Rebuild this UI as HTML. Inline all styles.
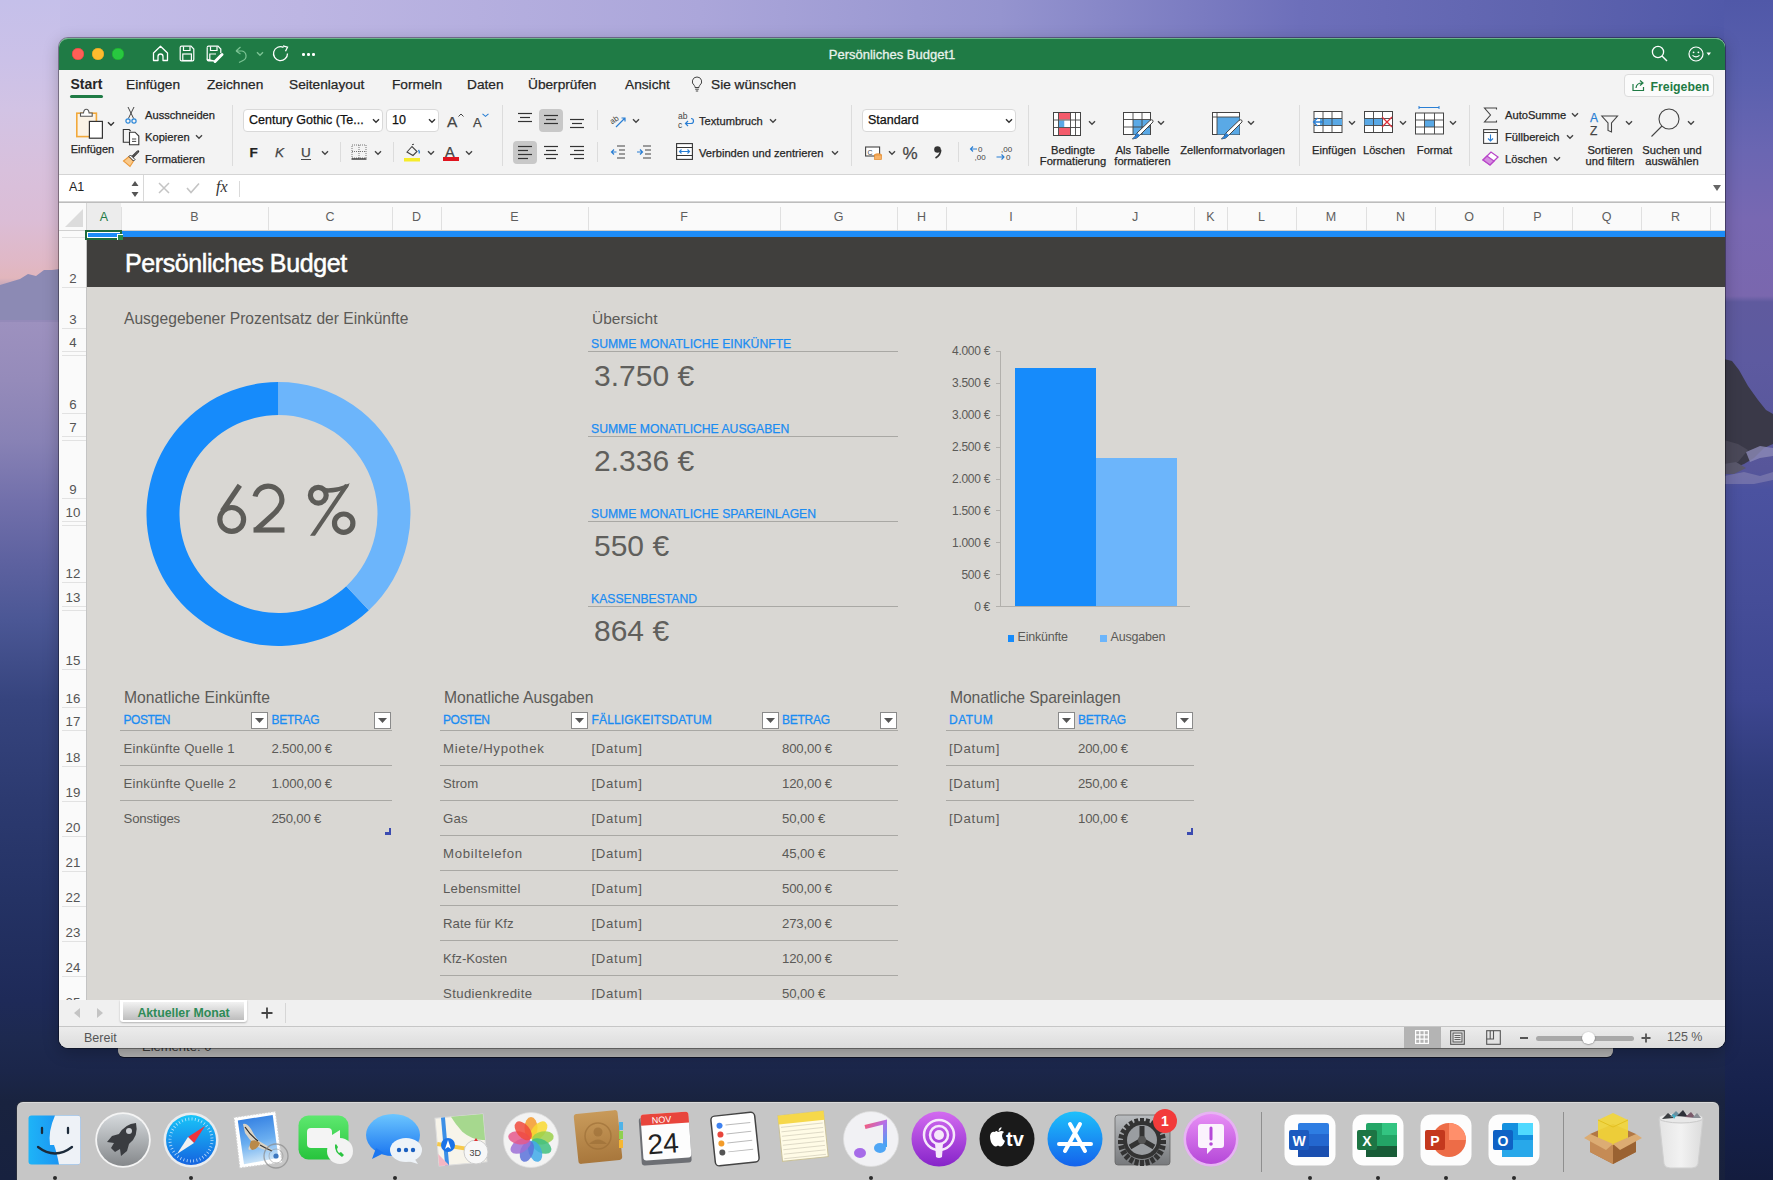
<!DOCTYPE html><html><head><meta charset="utf-8"><style>
*{margin:0;padding:0;box-sizing:border-box}
html,body{width:1773px;height:1180px;overflow:hidden;position:relative;font-family:"Liberation Sans",sans-serif;background:#2a3466}
.a{position:absolute}
.t{position:absolute;white-space:nowrap;line-height:1}
svg{position:absolute;overflow:visible}
</style></head><body><div class="a" style="left:0;top:0;width:1773px;height:120px;background:linear-gradient(90deg,#c6c0ea 0px,#bdb6e3 300px,#aba6da 700px,#9594cf 1000px,#6d6fba 1300px,#5e63ae 1550px,#5159a9 1724px,#5058a8 1773px)"></div>
<div class="a" style="left:0;top:0;width:60px;height:1180px;background:linear-gradient(180deg,#c5c0ea 0px,#cbc1e8 60px,#d2c3e4 110px,#d8c0dc 170px,#dbbdd6 220px,#e0b8c6 262px,#e2b6bc 278px,#8d8bb6 300px,#8a89b3 318px,#9d91bf 322px,#958bba 380px,#8882b5 440px,#7270ab 500px,#5e62a0 560px,#4b5795 620px,#36447e 700px,#2c3a70 800px,#243264 900px,#1e2a58 1000px,#1d294f 1040px,#1b264a 1070px,#19233f 1102px,#17213f 1180px)"></div>
<svg style="left:0;top:260px" width="60" height="70"><polygon points="0,25 10,22 20,19 28,14 36,16 44,10 52,10 60,9 60,60 0,60" fill="#8c8ab4"/><polygon points="0,60 60,60 60,62 0,62" fill="#948ab9"/></svg>
<div class="a" style="left:1724px;top:0;width:49px;height:1180px;background:linear-gradient(180deg,#5058a8 0px,#5a60ae 80px,#6a66b2 150px,#7868b2 220px,#7a67ae 296px,#5f5a9e 302px,#5d5aa0 360px,#57569a 470px,#4b52a0 490px,#454d98 600px,#3d4690 700px,#2f3b7a 780px,#273369 880px,#1f2b5c 980px,#1a2551 1050px,#15204a 1110px,#131c3e 1180px)"></div>
<svg style="left:1724px;top:340px" width="49" height="160"><polygon points="0,19 8,21 15,30 24,46 34,60 42,70 49,74 49,104 40,108 30,118 20,124 10,128 0,130" fill="#3a3948"/><polygon points="0,100 14,104 24,110 14,122 0,126" fill="#4a4858"/><polygon points="0,124 12,122 22,128 10,134 0,134" fill="#5a586c"/><polygon points="22,112 36,106 49,108 49,116 36,118 26,122" fill="#8c8ab6" opacity="0.8"/><polygon points="0,136 20,132 36,136 49,132 49,140 30,144 0,144" fill="#8784b2" opacity="0.6"/></svg>
<div class="a" style="left:59px;top:1040px;width:1666px;height:140px;background:linear-gradient(180deg,#1d294f,#1b264a 30px,#19233f 62px,#17203c)"></div>
<div class="a" style="left:118px;top:1030px;width:1495px;height:27px;background:#b0b0b0;border-radius:0 0 6px 6px;box-shadow:0 1px 0 rgba(0,0,0,.5);"></div>
<div class="t" style="left:142px;top:1040.00px;font-size:13px;color:#3a3a3a;">Elemente: 0</div>
<div class="a" style="left:59px;top:38px;width:1666px;height:1010px;background:#f3f3f3;border-radius:9px;box-shadow:0 4px 16px rgba(0,0,0,.25),0 0 0 1px rgba(0,0,0,.35);"></div>
<div class="a" style="left:59px;top:38px;width:1666px;height:32px;background:#1f7b45;border-radius:9px 9px 0 0;box-shadow:inset 0 1px 0 rgba(200,255,220,.45);"></div>
<div class="a" style="left:72px;top:48px;width:12px;height:12px;background:#fe5f57;border-radius:50%;box-shadow:inset 0 0 0 0.5px #e0443e;"></div>
<div class="a" style="left:92px;top:48px;width:12px;height:12px;background:#febc2e;border-radius:50%;box-shadow:inset 0 0 0 0.5px #dea123;"></div>
<div class="a" style="left:112px;top:48px;width:12px;height:12px;background:#28c840;border-radius:50%;box-shadow:inset 0 0 0 0.5px #1aab29;"></div>
<svg style="left:152px;top:45px;" width="17" height="17" viewBox="0 0 17 17"><path d="M1.5 8 L8.5 1.3 L15.5 8 V15.5 H11 V11.5 A2.5 2.5 0 0 0 6 11.5 V15.5 H1.5 Z" fill="none" stroke="#fff" stroke-width="1.3" stroke-linejoin="round"/></svg>
<svg style="left:179px;top:45px;" width="16" height="17" viewBox="0 0 16 17"><path d="M1.2 2.5 Q1.2 1.2 2.5 1.2 H12 L14.8 4 V14.5 Q14.8 15.8 13.5 15.8 H2.5 Q1.2 15.8 1.2 14.5 Z" fill="none" stroke="#fff" stroke-width="1.2"/><path d="M4.5 1.5 V5.5 H11 V1.5" fill="none" stroke="#fff" stroke-width="1.2"/><rect x="3.8" y="9" width="8.6" height="6.5" fill="none" stroke="#fff" stroke-width="1.2"/></svg>
<svg style="left:206px;top:45px;" width="18" height="18" viewBox="0 0 18 18"><path d="M1.2 2.5 Q1.2 1.2 2.5 1.2 H12 L14.8 4 V8 M8 15.8 H2.5 Q1.2 15.8 1.2 14.5 Z" fill="none" stroke="#fff" stroke-width="1.2"/><path d="M1.2 2.5 V14.5" stroke="#fff" stroke-width="1.2"/><path d="M4.5 1.5 V5.5 H11 V1.5" fill="none" stroke="#fff" stroke-width="1.2"/><path d="M3.8 15.5 V9 H10" fill="none" stroke="#fff" stroke-width="1.2"/><path d="M9 16.5 L16 9.5" stroke="#fff" stroke-width="3" stroke-linecap="round"/></svg>
<svg style="left:233px;top:45px;" width="16" height="18" viewBox="0 0 16 18"><path d="M3 6 L7.5 2 M3 6 L7.5 9 M3 6 H9 A5 5 0 0 1 10 15.5 L6 17.5" fill="none" stroke="#7cc394" stroke-width="1.2"/></svg>
<svg style="left:256px;top:51px;" width="8" height="6" viewBox="0 0 8 6"><path d="M1 1.2 L4 4.2 L7 1.2" fill="none" stroke="#7cc394" stroke-width="1.4"/></svg>
<svg style="left:272px;top:45px;" width="18" height="18" viewBox="0 0 18 18"><path d="M15.5 8.5 A7 7 0 1 1 11.5 2.3" fill="none" stroke="#fff" stroke-width="1.3"/><path d="M11 0.8 L15.5 2.2 L13.5 6.2" fill="none" stroke="#fff" stroke-width="1.3"/></svg>
<div class="a" style="left:302px;top:53px;width:2.5px;height:2.5px;background:#fff;border-radius:50%;"></div>
<div class="a" style="left:307px;top:53px;width:2.5px;height:2.5px;background:#fff;border-radius:50%;"></div>
<div class="a" style="left:312px;top:53px;width:2.5px;height:2.5px;background:#fff;border-radius:50%;"></div>
<div class="t" style="left:892px;top:47.50px;font-size:13px;color:#e8f2ec;transform:translateX(-50%);-webkit-text-stroke:0.3px currentColor;">Persönliches Budget1</div>
<svg style="left:1651px;top:45px;" width="18" height="18" viewBox="0 0 18 18"><circle cx="7" cy="7" r="5.6" fill="none" stroke="#fff" stroke-width="1.3"/><path d="M11 11 L16 16" stroke="#fff" stroke-width="1.4"/></svg>
<svg style="left:1687px;top:45px;" width="26" height="18" viewBox="0 0 26 18"><circle cx="9" cy="9" r="7" fill="none" stroke="#fff" stroke-width="1.2"/><circle cx="6.6" cy="7.3" r="0.9" fill="#fff"/><circle cx="11.4" cy="7.3" r="0.9" fill="#fff"/><path d="M5.5 10.3 Q9 13.5 12.5 10.3" fill="none" stroke="#fff" stroke-width="1.1"/><path d="M19.5 7.5 H24 L21.75 10.5 Z" fill="#fff"/></svg>
<div class="a" style="left:59px;top:70px;width:1666px;height:104px;background:#f3f3f3;"></div>
<div class="t" style="left:70.5px;top:77.45px;font-size:14px;color:#262626;font-weight:bold;">Start</div>
<div class="t" style="left:126px;top:77.70px;font-size:13.7px;color:#262626;-webkit-text-stroke:0.25px currentColor;">Einfügen</div>
<div class="t" style="left:207px;top:77.70px;font-size:13.7px;color:#262626;-webkit-text-stroke:0.25px currentColor;">Zeichnen</div>
<div class="t" style="left:289px;top:77.70px;font-size:13.7px;color:#262626;-webkit-text-stroke:0.25px currentColor;">Seitenlayout</div>
<div class="t" style="left:392px;top:77.70px;font-size:13.7px;color:#262626;-webkit-text-stroke:0.25px currentColor;">Formeln</div>
<div class="t" style="left:467px;top:77.70px;font-size:13.7px;color:#262626;-webkit-text-stroke:0.25px currentColor;">Daten</div>
<div class="t" style="left:528px;top:77.70px;font-size:13.7px;color:#262626;-webkit-text-stroke:0.25px currentColor;">Überprüfen</div>
<div class="t" style="left:625px;top:77.70px;font-size:13.7px;color:#262626;-webkit-text-stroke:0.25px currentColor;">Ansicht</div>
<div class="t" style="left:711px;top:77.70px;font-size:13.7px;color:#262626;-webkit-text-stroke:0.25px currentColor;">Sie wünschen</div>
<div class="a" style="left:70px;top:95px;width:33px;height:3px;background:#1f7b45;border-radius:1.5px;"></div>
<svg style="left:691px;top:76px;" width="12" height="17" viewBox="0 0 12 17"><path d="M6 1 A4.6 4.6 0 0 0 3.2 9.3 Q4 10.2 4 11.5 H8 Q8 10.2 8.8 9.3 A4.6 4.6 0 0 0 6 1 Z" fill="none" stroke="#444" stroke-width="1"/><path d="M4.2 13.2 H7.8 M4.8 15 H7.2" stroke="#444" stroke-width="1"/></svg>
<div class="a" style="left:1624px;top:74px;width:90px;height:23px;background:#fbfbfb;border:1px solid #dcdcdc;border-radius:4px;"></div>
<svg style="left:1632px;top:78px;" width="14" height="14" viewBox="0 0 14 14"><path d="M1 6 V12.5 H11.5 V9" fill="none" stroke="#1f7b45" stroke-width="1.2"/><path d="M4 10 Q4.5 5 10 5 M8 2.5 L11 5 L8 7.5" fill="none" stroke="#1f7b45" stroke-width="1.2"/></svg>
<div class="t" style="left:1650.5px;top:80.59px;font-size:12.3px;color:#1f7b45;font-weight:bold;">Freigeben</div>
<div class="a" style="left:59px;top:174px;width:1666px;height:1px;background:#d4d4d4;"></div>
<div class="a" style="left:232px;top:105px;width:1px;height:61px;background:#dcdcdc;"></div>
<div class="a" style="left:502px;top:105px;width:1px;height:61px;background:#dcdcdc;"></div>
<div class="a" style="left:851px;top:105px;width:1px;height:61px;background:#dcdcdc;"></div>
<div class="a" style="left:1028px;top:105px;width:1px;height:61px;background:#dcdcdc;"></div>
<div class="a" style="left:1299px;top:105px;width:1px;height:61px;background:#dcdcdc;"></div>
<div class="a" style="left:1469px;top:105px;width:1px;height:61px;background:#dcdcdc;"></div>
<div class="a" style="left:340px;top:142px;width:1px;height:20px;background:#dcdcdc;"></div>
<div class="a" style="left:393px;top:142px;width:1px;height:20px;background:#dcdcdc;"></div>
<div class="a" style="left:597px;top:142px;width:1px;height:20px;background:#dcdcdc;"></div>
<div class="a" style="left:958px;top:142px;width:1px;height:20px;background:#dcdcdc;"></div>
<div class="a" style="left:597px;top:110px;width:1px;height:20px;background:#dcdcdc;"></div>
<svg style="left:75px;top:107px;" width="34" height="36" viewBox="0 0 34 36"><rect x="1.8" y="6.2" width="19.6" height="23.4" fill="#fbf3e6" stroke="#f2a93b" stroke-width="1.6"/><path d="M5.5 9.3 V6 H8.5 Q9 2.3 11.3 2.3 Q13.6 2.3 14.1 6 H17.2 V9.3 Z" fill="#fff" stroke="#555" stroke-width="1.1"/><rect x="14.4" y="14.4" width="13" height="16.8" fill="#fff" stroke="#333" stroke-width="1.2"/></svg>
<svg style="left:107px;top:120.5px;" width="8" height="6" viewBox="0 0 8 6"><path d="M1 1.2 L4 4.2 L7 1.2" fill="none" stroke="#333" stroke-width="1.4"/></svg>
<div class="t" style="left:92.5px;top:144.19px;font-size:11px;color:#262626;transform:translateX(-50%);-webkit-text-stroke:0.25px currentColor;">Einfügen</div>
<svg style="left:124px;top:106px;" width="14" height="18" viewBox="0 0 14 18"><path d="M4 1 L9.6 12.5 M10 1 L4.4 12.5" stroke="#444" stroke-width="1"/><circle cx="4" cy="15" r="2.1" fill="none" stroke="#2a86d8" stroke-width="1.2"/><circle cx="10" cy="15" r="2.1" fill="none" stroke="#2a86d8" stroke-width="1.2"/></svg>
<div class="t" style="left:145px;top:109.56px;font-size:11.15px;color:#262626;-webkit-text-stroke:0.25px currentColor;">Ausschneiden</div>
<svg style="left:122px;top:128px;" width="18" height="18" viewBox="0 0 18 18"><path d="M7.5 14.3 H1.3 V1.5 H7.2 L8.6 3" fill="none" stroke="#333" stroke-width="1.1"/><path d="M7.5 4.2 H13 L16.8 8 V16.7 H7.5 Z" fill="#fff" stroke="#333" stroke-width="1.1"/><path d="M10 11 H14.2 M10 13.4 H14.2" stroke="#444" stroke-width="1"/></svg>
<div class="t" style="left:145px;top:131.56px;font-size:11.15px;color:#262626;-webkit-text-stroke:0.25px currentColor;">Kopieren</div>
<svg style="left:195px;top:134px;" width="8" height="6" viewBox="0 0 8 6"><path d="M1 1.2 L4 4.2 L7 1.2" fill="none" stroke="#444" stroke-width="1.4"/></svg>
<svg style="left:122px;top:150px;" width="18" height="18" viewBox="0 0 18 18"><path d="M1.5 11 L7 6.5 L11.5 11 L8 16.5 Z" fill="#f9c98a" stroke="#eb9a3c" stroke-width="1.1"/><path d="M7 6.5 L11.5 11 L13 9.5 L8.5 5 Z" fill="#fff" stroke="#333" stroke-width="1"/><path d="M11 7.5 L16.3 2.2 Q17 1.5 16.6 1 Q16 0.6 15.4 1.2 L10 6.5" fill="#fff" stroke="#333" stroke-width="1.1"/></svg>
<div class="t" style="left:145px;top:153.56px;font-size:11.15px;color:#262626;-webkit-text-stroke:0.25px currentColor;">Formatieren</div>
<div class="a" style="left:243px;top:109px;width:140px;height:23px;background:#fff;border:1px solid #d9d9d9;border-radius:4px;"></div>
<div class="t" style="left:249px;top:114.42px;font-size:12.5px;color:#111;-webkit-text-stroke:0.25px currentColor;">Century Gothic (Te...</div>
<svg style="left:372px;top:118px;" width="8" height="6" viewBox="0 0 8 6"><path d="M1 1.2 L4 4.2 L7 1.2" fill="none" stroke="#333" stroke-width="1.4"/></svg>
<div class="a" style="left:386px;top:109px;width:53px;height:23px;background:#fff;border:1px solid #d9d9d9;border-radius:4px;"></div>
<div class="t" style="left:392px;top:114.42px;font-size:12.5px;color:#111;-webkit-text-stroke:0.25px currentColor;">10</div>
<svg style="left:428px;top:118px;" width="8" height="6" viewBox="0 0 8 6"><path d="M1 1.2 L4 4.2 L7 1.2" fill="none" stroke="#333" stroke-width="1.4"/></svg>
<div class="t" style="left:447px;top:113.88px;font-size:15.5px;color:#444;-webkit-text-stroke:0.25px currentColor;">A</div>
<svg style="left:458px;top:113px;" width="6" height="4" viewBox="0 0 6 4"><path d="M0.5 3.5 L3 1 L5.5 3.5" fill="none" stroke="#444" stroke-width="1"/></svg>
<div class="t" style="left:473px;top:116.00px;font-size:13px;color:#444;-webkit-text-stroke:0.25px currentColor;">A</div>
<svg style="left:482px;top:113px;" width="7" height="4" viewBox="0 0 7 4"><path d="M0.5 0.8 L3.5 3.3 L6.5 0.8" fill="none" stroke="#2a7fd4" stroke-width="1.1"/></svg>
<div class="t" style="left:249.5px;top:146.07px;font-size:13.5px;color:#222;font-weight:bold;-webkit-text-stroke:0.25px currentColor;">F</div>
<div class="t" style="left:275px;top:146.07px;font-size:13.5px;color:#444;-webkit-text-stroke:0.25px currentColor;"><i>K</i></div>
<div class="t" style="left:301px;top:146.07px;font-size:13.5px;color:#444;-webkit-text-stroke:0.25px currentColor;">U</div>
<div class="a" style="left:301px;top:159px;width:10px;height:1px;background:#444;"></div>
<svg style="left:321px;top:150px;" width="8" height="6" viewBox="0 0 8 6"><path d="M1 1.2 L4 4.2 L7 1.2" fill="none" stroke="#444" stroke-width="1.4"/></svg>
<svg style="left:351px;top:144px;" width="16" height="16" viewBox="0 0 16 16"><rect x="1" y="1" width="14" height="13" fill="none" stroke="#555" stroke-width="0.8" stroke-dasharray="1 1"/><path d="M8 1 V14 M1 7.5 H15" stroke="#555" stroke-width="0.8" stroke-dasharray="1 1"/><path d="M0.5 15 H15.5" stroke="#222" stroke-width="1.3"/></svg>
<svg style="left:374px;top:150px;" width="8" height="6" viewBox="0 0 8 6"><path d="M1 1.2 L4 4.2 L7 1.2" fill="none" stroke="#444" stroke-width="1.4"/></svg>
<svg style="left:403px;top:143px;" width="20" height="20" viewBox="0 0 20 20"><path d="M4 9 L9 3.5 L14 8.5 L10 12.5 Z" fill="none" stroke="#444" stroke-width="1.1"/><path d="M9 2 Q10 0.5 11 1.5" fill="none" stroke="#444" stroke-width="1"/><path d="M15.5 7 Q17 9 16 10.5" fill="none" stroke="#2a7fd4" stroke-width="1.3"/><rect x="1" y="15" width="16" height="3.5" fill="#f6ec2a"/></svg>
<svg style="left:427px;top:150px;" width="8" height="6" viewBox="0 0 8 6"><path d="M1 1.2 L4 4.2 L7 1.2" fill="none" stroke="#444" stroke-width="1.4"/></svg>
<div class="t" style="left:445px;top:144.73px;font-size:14.5px;color:#444;-webkit-text-stroke:0.25px currentColor;">A</div>
<div class="a" style="left:443px;top:157px;width:16px;height:3.5px;background:#e0141e;"></div>
<svg style="left:465px;top:150px;" width="8" height="6" viewBox="0 0 8 6"><path d="M1 1.2 L4 4.2 L7 1.2" fill="none" stroke="#444" stroke-width="1.4"/></svg>
<div class="a" style="left:539px;top:109px;width:24px;height:23px;background:#c8c8c8;border-radius:4px;"></div>
<svg style="left:518px;top:113px;" width="14" height="13" viewBox="0 0 14 13"><path d="M0.0 0.5 H14.0" stroke="#333" stroke-width="1.2"/><path d="M2.0 4.5 H12.0" stroke="#333" stroke-width="1.2"/><path d="M0.0 8.5 H14.0" stroke="#333" stroke-width="1.2"/></svg>
<svg style="left:544px;top:115px;" width="14" height="13" viewBox="0 0 14 13"><path d="M0.0 0.5 H14.0" stroke="#333" stroke-width="1.2"/><path d="M2.0 4.5 H12.0" stroke="#333" stroke-width="1.2"/><path d="M0.0 8.5 H14.0" stroke="#333" stroke-width="1.2"/></svg>
<svg style="left:570px;top:119px;" width="14" height="13" viewBox="0 0 14 13"><path d="M0.0 0.5 H14.0" stroke="#333" stroke-width="1.2"/><path d="M2.0 4.5 H12.0" stroke="#333" stroke-width="1.2"/><path d="M0.0 8.5 H14.0" stroke="#333" stroke-width="1.2"/></svg>
<div class="a" style="left:513px;top:141px;width:24px;height:23px;background:#c8c8c8;border-radius:4px;"></div>
<svg style="left:518px;top:146px;" width="14" height="13" viewBox="0 0 14 13"><path d="M0 0.5 H14" stroke="#333" stroke-width="1.2"/><path d="M0 4.5 H10" stroke="#333" stroke-width="1.2"/><path d="M0 8.5 H14" stroke="#333" stroke-width="1.2"/><path d="M0 12.5 H10" stroke="#333" stroke-width="1.2"/></svg>
<svg style="left:544px;top:146px;" width="14" height="13" viewBox="0 0 14 13"><path d="M0.0 0.5 H14.0" stroke="#333" stroke-width="1.2"/><path d="M2.0 4.5 H12.0" stroke="#333" stroke-width="1.2"/><path d="M0.0 8.5 H14.0" stroke="#333" stroke-width="1.2"/><path d="M2.0 12.5 H12.0" stroke="#333" stroke-width="1.2"/></svg>
<svg style="left:570px;top:146px;" width="14" height="13" viewBox="0 0 14 13"><path d="M0 0.5 H14" stroke="#333" stroke-width="1.2"/><path d="M4 4.5 H14" stroke="#333" stroke-width="1.2"/><path d="M0 8.5 H14" stroke="#333" stroke-width="1.2"/><path d="M4 12.5 H14" stroke="#333" stroke-width="1.2"/></svg>
<svg style="left:609px;top:112px;" width="20" height="18" viewBox="0 0 20 18"><text x="1" y="10" font-size="8" fill="#444" transform="rotate(-35 6 8)" font-family="Liberation Sans">ab</text><path d="M7 15 L16 6 M12.5 6 H16 V9.5" fill="none" stroke="#2a7fd4" stroke-width="1.2"/></svg>
<svg style="left:632px;top:118px;" width="8" height="6" viewBox="0 0 8 6"><path d="M1 1.2 L4 4.2 L7 1.2" fill="none" stroke="#444" stroke-width="1.4"/></svg>
<svg style="left:610px;top:145px;" width="16" height="14" viewBox="0 0 16 14"><path d="M7 1 H15 M9 5 H15 M9 9 H15 M7 13 H15" stroke="#444" stroke-width="1.1"/><path d="M6.5 7 H1.5 M4 4.5 L1.5 7 L4 9.5" fill="none" stroke="#2a7fd4" stroke-width="1.2"/></svg>
<svg style="left:636px;top:145px;" width="16" height="14" viewBox="0 0 16 14"><path d="M7 1 H15 M9 5 H15 M9 9 H15 M7 13 H15" stroke="#444" stroke-width="1.1"/><path d="M1 7 H6.5 M4 4.5 L6.5 7 L4 9.5" fill="none" stroke="#2a7fd4" stroke-width="1.2"/></svg>
<svg style="left:677px;top:111px;" width="18" height="18" viewBox="0 0 18 18"><text x="1" y="8" font-size="8.5" fill="#444" font-family="Liberation Sans">ab</text><text x="1" y="16.5" font-size="8.5" fill="#444" font-family="Liberation Sans">c</text><path d="M9 12.5 H14 Q16.5 12.5 16.5 10 Q16.5 7.5 14 7.5 M11 10 L8.5 12.5 L11 15" fill="none" stroke="#2a7fd4" stroke-width="1.2"/></svg>
<div class="t" style="left:699px;top:115.56px;font-size:11.15px;color:#262626;-webkit-text-stroke:0.25px currentColor;">Textumbruch</div>
<svg style="left:769px;top:118px;" width="8" height="6" viewBox="0 0 8 6"><path d="M1 1.2 L4 4.2 L7 1.2" fill="none" stroke="#444" stroke-width="1.4"/></svg>
<svg style="left:676px;top:143px;" width="17" height="17" viewBox="0 0 17 17"><rect x="0.6" y="0.6" width="15.8" height="15.8" fill="#fff" stroke="#333" stroke-width="1.1"/><path d="M0.6 4.5 H16.4 M0.6 12.5 H16.4" stroke="#333" stroke-width="1"/><path d="M3.5 8.5 H13.5 M5.5 6.5 L3.5 8.5 L5.5 10.5 M11.5 6.5 L13.5 8.5 L11.5 10.5" fill="none" stroke="#2a7fd4" stroke-width="1.1"/></svg>
<div class="t" style="left:699px;top:148.06px;font-size:11.15px;color:#262626;-webkit-text-stroke:0.25px currentColor;">Verbinden und zentrieren</div>
<svg style="left:831px;top:150px;" width="8" height="6" viewBox="0 0 8 6"><path d="M1 1.2 L4 4.2 L7 1.2" fill="none" stroke="#444" stroke-width="1.4"/></svg>
<div class="a" style="left:862px;top:109px;width:154px;height:23px;background:#fff;border:1px solid #d9d9d9;border-radius:4px;"></div>
<div class="t" style="left:868px;top:114.42px;font-size:12.5px;color:#111;-webkit-text-stroke:0.25px currentColor;">Standard</div>
<svg style="left:1005px;top:118px;" width="8" height="6" viewBox="0 0 8 6"><path d="M1 1.2 L4 4.2 L7 1.2" fill="none" stroke="#333" stroke-width="1.4"/></svg>
<svg style="left:865px;top:145px;" width="18" height="16" viewBox="0 0 18 16"><rect x="0.6" y="2" width="14" height="9" fill="#fff" stroke="#444" stroke-width="1.1"/><text x="2.5" y="9.5" font-size="7" fill="#444" font-family="Liberation Sans">C</text><ellipse cx="13" cy="10" rx="3.5" ry="1.3" fill="#f7b267" stroke="#e38a2e" stroke-width="0.7"/><rect x="9.5" y="10" width="7" height="4.5" fill="#f7b267" stroke="#e38a2e" stroke-width="0.7"/></svg>
<svg style="left:888px;top:150px;" width="8" height="6" viewBox="0 0 8 6"><path d="M1 1.2 L4 4.2 L7 1.2" fill="none" stroke="#444" stroke-width="1.4"/></svg>
<div class="t" style="left:902.5px;top:144.61px;font-size:17px;color:#444;-webkit-text-stroke:0.25px currentColor;">%</div>
<svg style="left:933px;top:145px;" width="10" height="14" viewBox="0 0 10 14"><circle cx="4.5" cy="4.5" r="3.3" fill="#333"/><path d="M7.6 4.8 Q7.8 10 2.5 13" fill="none" stroke="#333" stroke-width="1.7"/></svg>
<svg style="left:969px;top:144px;" width="20" height="18" viewBox="0 0 20 18"><text x="9" y="8" font-size="8" fill="#444" font-family="Liberation Sans">0</text><text x="5.5" y="16" font-size="8" fill="#444" font-family="Liberation Sans">,00</text><path d="M8 5 H1.5 M4 2.5 L1.5 5 L4 7.5" fill="none" stroke="#2a7fd4" stroke-width="1.1"/></svg>
<svg style="left:995px;top:144px;" width="20" height="18" viewBox="0 0 20 18"><text x="6" y="8" font-size="8" fill="#444" font-family="Liberation Sans">,00</text><text x="11" y="16" font-size="8" fill="#444" font-family="Liberation Sans">0</text><path d="M1.5 13 H9 M6.5 10.5 L9 13 L6.5 15.5" fill="none" stroke="#2a7fd4" stroke-width="1.1"/></svg>
<svg style="left:1053px;top:112px;" width="30" height="25" viewBox="0 0 30 25"><rect x="0.5" y="0.5" width="27" height="23" fill="#fff" stroke="#444" stroke-width="1"/><rect x="5.5" y="1" width="12" height="6.5" fill="#f45b6b"/><rect x="5.5" y="16" width="12" height="7" fill="#f45b6b"/><rect x="5.5" y="8.5" width="6" height="6.5" fill="#5aa9e6"/><rect x="11.5" y="8.5" width="6" height="6.5" fill="#fff"/><path d="M0.5 8 H27.5 M0.5 15.5 H27.5 M5.5 0.5 V23.5 M17.5 0.5 V23.5 M22.5 0.5 V23.5" stroke="#444" stroke-width="0.9" fill="none"/></svg>
<svg style="left:1088px;top:120px;" width="8" height="6" viewBox="0 0 8 6"><path d="M1 1.2 L4 4.2 L7 1.2" fill="none" stroke="#444" stroke-width="1.4"/></svg>
<div class="t" style="left:1073px;top:144.56px;font-size:11.15px;color:#262626;transform:translateX(-50%);-webkit-text-stroke:0.25px currentColor;">Bedingte</div>
<div class="t" style="left:1073px;top:156.06px;font-size:11.15px;color:#262626;transform:translateX(-50%);-webkit-text-stroke:0.25px currentColor;">Formatierung</div>
<svg style="left:1123px;top:112px;" width="32" height="28" viewBox="0 0 32 28"><rect x="0.5" y="0.5" width="27" height="22" fill="#fff" stroke="#444" stroke-width="1"/><rect x="10" y="8" width="17" height="14.5" fill="#5aa9e6"/><path d="M0.5 7.5 H27.5 M0.5 15 H27.5 M10 0.5 V23 M19 0.5 V23" stroke="#444" stroke-width="0.9" fill="none"/><path d="M14 21 L27 8.5 Q29 7 30 8.5 Q30.5 10 29 11 L17 23 Q14 27 9.5 27 Q12 25 14 21 Z" fill="#fff" stroke="#444" stroke-width="1"/><path d="M9.5 27 Q12 25 14 21 L17 23 Q14 27 9.5 27" fill="#2a7fd4"/></svg>
<svg style="left:1157px;top:120px;" width="8" height="6" viewBox="0 0 8 6"><path d="M1 1.2 L4 4.2 L7 1.2" fill="none" stroke="#444" stroke-width="1.4"/></svg>
<div class="t" style="left:1142.5px;top:144.56px;font-size:11.15px;color:#262626;transform:translateX(-50%);-webkit-text-stroke:0.25px currentColor;">Als Tabelle</div>
<div class="t" style="left:1142.5px;top:156.06px;font-size:11.15px;color:#262626;transform:translateX(-50%);-webkit-text-stroke:0.25px currentColor;">formatieren</div>
<svg style="left:1212px;top:112px;" width="32" height="28" viewBox="0 0 32 28"><rect x="0.5" y="0.5" width="27" height="22" fill="#fff" stroke="#444" stroke-width="1"/><rect x="5" y="5" width="22.5" height="17.5" fill="#5aa9e6"/><path d="M0.5 5 H27.5 M5 0.5 V23" stroke="#444" stroke-width="0.9" fill="none"/><path d="M14 21 L27 8.5 Q29 7 30 8.5 Q30.5 10 29 11 L17 23 Q14 27 9.5 27 Q12 25 14 21 Z" fill="#fff" stroke="#444" stroke-width="1"/><path d="M9.5 27 Q12 25 14 21 L17 23 Q14 27 9.5 27" fill="#2a7fd4"/></svg>
<svg style="left:1247px;top:120px;" width="8" height="6" viewBox="0 0 8 6"><path d="M1 1.2 L4 4.2 L7 1.2" fill="none" stroke="#444" stroke-width="1.4"/></svg>
<div class="t" style="left:1232.5px;top:144.56px;font-size:11.15px;color:#262626;transform:translateX(-50%);-webkit-text-stroke:0.25px currentColor;">Zellenformatvorlagen</div>
<svg style="left:1312px;top:111px;" width="32" height="24" viewBox="0 0 32 24"><rect x="2" y="0.5" width="28" height="21" fill="#fff" stroke="#444" stroke-width="1"/><rect x="8" y="7.5" width="22" height="7" fill="#5aa9e6"/><path d="M2 7.5 H30 M2 14.5 H30 M11 0.5 V21.5 M20 0.5 V21.5" stroke="#444" stroke-width="0.9"/><path d="M11 11 H1.5 M5.5 7 L1.5 11 L5.5 15" fill="none" stroke="#2a7fd4" stroke-width="1.3"/></svg>
<svg style="left:1348px;top:120px;" width="8" height="6" viewBox="0 0 8 6"><path d="M1 1.2 L4 4.2 L7 1.2" fill="none" stroke="#444" stroke-width="1.4"/></svg>
<div class="t" style="left:1334px;top:144.56px;font-size:11.15px;color:#262626;transform:translateX(-50%);-webkit-text-stroke:0.25px currentColor;">Einfügen</div>
<svg style="left:1364px;top:111px;" width="32" height="24" viewBox="0 0 32 24"><rect x="0.5" y="0.5" width="28" height="21" fill="#fff" stroke="#444" stroke-width="1"/><rect x="0.5" y="7.5" width="18" height="7" fill="#5aa9e6"/><path d="M0.5 7.5 H28.5 M0.5 14.5 H28.5 M9.5 0.5 V21.5 M18.5 0.5 V21.5" stroke="#444" stroke-width="0.9"/><path d="M18 6 L28 16 M28 6 L18 16" stroke="#e0303a" stroke-width="1.3"/></svg>
<svg style="left:1399px;top:120px;" width="8" height="6" viewBox="0 0 8 6"><path d="M1 1.2 L4 4.2 L7 1.2" fill="none" stroke="#444" stroke-width="1.4"/></svg>
<div class="t" style="left:1384px;top:144.56px;font-size:11.15px;color:#262626;transform:translateX(-50%);-webkit-text-stroke:0.25px currentColor;">Löschen</div>
<svg style="left:1415px;top:106px;" width="30" height="30" viewBox="0 0 30 30"><path d="M4 1.5 H24 M4 0 V3 M24 0 V3" stroke="#2a7fd4" stroke-width="1"/><rect x="0.5" y="7" width="28" height="21" fill="#fff" stroke="#444" stroke-width="1"/><rect x="9.5" y="14" width="10" height="7" fill="#5aa9e6"/><path d="M0.5 14 H28.5 M0.5 21 H28.5 M9.5 7 V28 M19.5 7 V28" stroke="#444" stroke-width="0.9"/></svg>
<svg style="left:1449px;top:120px;" width="8" height="6" viewBox="0 0 8 6"><path d="M1 1.2 L4 4.2 L7 1.2" fill="none" stroke="#444" stroke-width="1.4"/></svg>
<div class="t" style="left:1434.5px;top:144.56px;font-size:11.15px;color:#262626;transform:translateX(-50%);-webkit-text-stroke:0.25px currentColor;">Format</div>
<svg style="left:1483px;top:107px;" width="15" height="16" viewBox="0 0 15 16"><path d="M13.5 2.5 V1 H1.5 L7.5 8 L1.5 15 H13.5 V13.5" fill="none" stroke="#444" stroke-width="1.1"/></svg>
<div class="t" style="left:1505px;top:109.56px;font-size:11.15px;color:#262626;-webkit-text-stroke:0.25px currentColor;">AutoSumme</div>
<svg style="left:1571px;top:112px;" width="8" height="6" viewBox="0 0 8 6"><path d="M1 1.2 L4 4.2 L7 1.2" fill="none" stroke="#444" stroke-width="1.4"/></svg>
<svg style="left:1483px;top:129px;" width="15" height="15" viewBox="0 0 15 15"><rect x="0.6" y="0.6" width="13.8" height="13.8" fill="#fff" stroke="#444" stroke-width="1.1"/><path d="M0.6 3.5 H14.4" stroke="#444" stroke-width="1"/><path d="M7.5 5.5 V12 M5 9.5 L7.5 12 L10 9.5" fill="none" stroke="#2a7fd4" stroke-width="1.1"/></svg>
<div class="t" style="left:1505px;top:131.56px;font-size:11.15px;color:#262626;-webkit-text-stroke:0.25px currentColor;">Füllbereich</div>
<svg style="left:1566px;top:134px;" width="8" height="6" viewBox="0 0 8 6"><path d="M1 1.2 L4 4.2 L7 1.2" fill="none" stroke="#444" stroke-width="1.4"/></svg>
<svg style="left:1482px;top:150px;" width="18" height="17" viewBox="0 0 18 17"><path d="M1 10 L9 2 L16 7 L8 15 Z" fill="#fff" stroke="#b845c8" stroke-width="1.3"/><path d="M1 10 L5 6 L12 11 L8 15 Z" fill="#d58ee0" stroke="#b845c8" stroke-width="1.3"/></svg>
<div class="t" style="left:1505px;top:153.56px;font-size:11.15px;color:#262626;-webkit-text-stroke:0.25px currentColor;">Löschen</div>
<svg style="left:1553px;top:156px;" width="8" height="6" viewBox="0 0 8 6"><path d="M1 1.2 L4 4.2 L7 1.2" fill="none" stroke="#444" stroke-width="1.4"/></svg>
<div class="t" style="left:1590px;top:111.84px;font-size:12px;color:#2a7fd4;-webkit-text-stroke:0.25px currentColor;">A</div>
<div class="t" style="left:1590px;top:124.84px;font-size:12px;color:#444;-webkit-text-stroke:0.25px currentColor;">Z</div>
<svg style="left:1601px;top:115px;" width="18" height="20" viewBox="0 0 18 20"><path d="M0.8 1 H16.5 L10.5 8 V17 L7 15.5 V8 Z" fill="none" stroke="#444" stroke-width="1.1"/></svg>
<svg style="left:1625px;top:120px;" width="8" height="6" viewBox="0 0 8 6"><path d="M1 1.2 L4 4.2 L7 1.2" fill="none" stroke="#444" stroke-width="1.4"/></svg>
<div class="t" style="left:1610px;top:144.56px;font-size:11.15px;color:#262626;transform:translateX(-50%);-webkit-text-stroke:0.25px currentColor;">Sortieren</div>
<div class="t" style="left:1610px;top:156.06px;font-size:11.15px;color:#262626;transform:translateX(-50%);-webkit-text-stroke:0.25px currentColor;">und filtern</div>
<svg style="left:1650px;top:108px;" width="30" height="30" viewBox="0 0 30 30"><circle cx="19" cy="11" r="10" fill="none" stroke="#444" stroke-width="1.1"/><path d="M12 18 L1.5 28.5" stroke="#444" stroke-width="1.1"/></svg>
<svg style="left:1687px;top:120px;" width="8" height="6" viewBox="0 0 8 6"><path d="M1 1.2 L4 4.2 L7 1.2" fill="none" stroke="#444" stroke-width="1.4"/></svg>
<div class="t" style="left:1672px;top:144.56px;font-size:11.15px;color:#262626;transform:translateX(-50%);-webkit-text-stroke:0.25px currentColor;">Suchen und</div>
<div class="t" style="left:1672px;top:156.06px;font-size:11.15px;color:#262626;transform:translateX(-50%);-webkit-text-stroke:0.25px currentColor;">auswählen</div>
<div class="a" style="left:59px;top:175px;width:1666px;height:27px;background:#ffffff;"></div>
<div class="a" style="left:143px;top:175px;width:1px;height:27px;background:#d8d8d8;"></div>
<div class="t" style="left:69px;top:181.42px;font-size:12.5px;color:#222;">A1</div>
<svg style="left:130px;top:179px;" width="10" height="20" viewBox="0 0 10 20"><path d="M1.5 7 L5 2 L8.5 7 Z M1.5 13 L5 18 L8.5 13 Z" fill="#555"/></svg>
<svg style="left:158px;top:182px;" width="12" height="12" viewBox="0 0 12 12"><path d="M1 1 L11 11 M11 1 L1 11" stroke="#c4c4c4" stroke-width="1.5"/></svg>
<svg style="left:186px;top:182px;" width="14" height="12" viewBox="0 0 14 12"><path d="M1 6 L5 10.5 L13 1.5" fill="none" stroke="#c4c4c4" stroke-width="1.6"/></svg>
<div class="t" style="left:216px;top:179.46px;font-size:16px;color:#333;font-family:'Liberation Serif',serif;"><i>fx</i></div>
<div class="a" style="left:239px;top:181px;width:1px;height:16px;background:#dadada;"></div>
<svg style="left:1712px;top:184px;" width="10" height="8" viewBox="0 0 10 8"><path d="M1 1 H9 L5 7 Z" fill="#666"/></svg>
<div class="a" style="left:59px;top:201px;width:1666px;height:1px;background:#d6d6d6;"></div>
<div class="a" style="left:59px;top:202px;width:1666px;height:1px;background:#bdbdbd;"></div>
<div class="a" style="left:59px;top:203px;width:1666px;height:28px;background:#fafafa;"></div>
<div class="a" style="left:59px;top:230px;width:1666px;height:1px;background:#d0d0d0;"></div>
<svg style="left:63px;top:207px;" width="22" height="22" viewBox="0 0 22 22"><path d="M20 2 V20 H2 Z" fill="#dcdcdc"/></svg>
<div class="a" style="left:86px;top:203px;width:1px;height:28px;background:#d6d6d6;"></div>
<div class="a" style="left:87px;top:203px;width:34px;height:28px;background:#ececec;"></div>
<div class="a" style="left:121px;top:207px;width:1px;height:23px;background:#e0e0e0;"></div>
<div class="t" style="left:104.0px;top:211.42px;font-size:12.5px;color:#1f7b45;transform:translateX(-50%);">A</div>
<div class="a" style="left:268px;top:207px;width:1px;height:23px;background:#e0e0e0;"></div>
<div class="t" style="left:194.5px;top:211.42px;font-size:12.5px;color:#5e5e5e;transform:translateX(-50%);">B</div>
<div class="a" style="left:392px;top:207px;width:1px;height:23px;background:#e0e0e0;"></div>
<div class="t" style="left:330.0px;top:211.42px;font-size:12.5px;color:#5e5e5e;transform:translateX(-50%);">C</div>
<div class="a" style="left:441px;top:207px;width:1px;height:23px;background:#e0e0e0;"></div>
<div class="t" style="left:416.5px;top:211.42px;font-size:12.5px;color:#5e5e5e;transform:translateX(-50%);">D</div>
<div class="a" style="left:588px;top:207px;width:1px;height:23px;background:#e0e0e0;"></div>
<div class="t" style="left:514.5px;top:211.42px;font-size:12.5px;color:#5e5e5e;transform:translateX(-50%);">E</div>
<div class="a" style="left:780px;top:207px;width:1px;height:23px;background:#e0e0e0;"></div>
<div class="t" style="left:684.0px;top:211.42px;font-size:12.5px;color:#5e5e5e;transform:translateX(-50%);">F</div>
<div class="a" style="left:897px;top:207px;width:1px;height:23px;background:#e0e0e0;"></div>
<div class="t" style="left:838.5px;top:211.42px;font-size:12.5px;color:#5e5e5e;transform:translateX(-50%);">G</div>
<div class="a" style="left:946px;top:207px;width:1px;height:23px;background:#e0e0e0;"></div>
<div class="t" style="left:921.5px;top:211.42px;font-size:12.5px;color:#5e5e5e;transform:translateX(-50%);">H</div>
<div class="a" style="left:1076px;top:207px;width:1px;height:23px;background:#e0e0e0;"></div>
<div class="t" style="left:1011.0px;top:211.42px;font-size:12.5px;color:#5e5e5e;transform:translateX(-50%);">I</div>
<div class="a" style="left:1194px;top:207px;width:1px;height:23px;background:#e0e0e0;"></div>
<div class="t" style="left:1135.0px;top:211.42px;font-size:12.5px;color:#5e5e5e;transform:translateX(-50%);">J</div>
<div class="a" style="left:1227px;top:207px;width:1px;height:23px;background:#e0e0e0;"></div>
<div class="t" style="left:1210.5px;top:211.42px;font-size:12.5px;color:#5e5e5e;transform:translateX(-50%);">K</div>
<div class="a" style="left:1296px;top:207px;width:1px;height:23px;background:#e0e0e0;"></div>
<div class="t" style="left:1261.5px;top:211.42px;font-size:12.5px;color:#5e5e5e;transform:translateX(-50%);">L</div>
<div class="a" style="left:1366px;top:207px;width:1px;height:23px;background:#e0e0e0;"></div>
<div class="t" style="left:1331.0px;top:211.42px;font-size:12.5px;color:#5e5e5e;transform:translateX(-50%);">M</div>
<div class="a" style="left:1435px;top:207px;width:1px;height:23px;background:#e0e0e0;"></div>
<div class="t" style="left:1400.5px;top:211.42px;font-size:12.5px;color:#5e5e5e;transform:translateX(-50%);">N</div>
<div class="a" style="left:1503px;top:207px;width:1px;height:23px;background:#e0e0e0;"></div>
<div class="t" style="left:1469.0px;top:211.42px;font-size:12.5px;color:#5e5e5e;transform:translateX(-50%);">O</div>
<div class="a" style="left:1572px;top:207px;width:1px;height:23px;background:#e0e0e0;"></div>
<div class="t" style="left:1537.5px;top:211.42px;font-size:12.5px;color:#5e5e5e;transform:translateX(-50%);">P</div>
<div class="a" style="left:1641px;top:207px;width:1px;height:23px;background:#e0e0e0;"></div>
<div class="t" style="left:1606.5px;top:211.42px;font-size:12.5px;color:#5e5e5e;transform:translateX(-50%);">Q</div>
<div class="a" style="left:1710px;top:207px;width:1px;height:23px;background:#e0e0e0;"></div>
<div class="t" style="left:1675.5px;top:211.42px;font-size:12.5px;color:#5e5e5e;transform:translateX(-50%);">R</div>
<div class="a" style="left:59px;top:231px;width:28px;height:769px;background:#fafafa;"></div>
<div class="a" style="left:86px;top:231px;width:1px;height:769px;background:#c4c4c4;"></div>
<div class="a" style="left:62px;top:237px;width:24px;height:1px;background:#e2e2e2;"></div>
<div class="a" style="left:62px;top:287px;width:24px;height:1px;background:#e2e2e2;"></div>
<div class="t" style="left:73px;top:272.44px;font-size:13.3px;color:#555;transform:translateX(-50%);">2</div>
<div class="a" style="left:62px;top:328px;width:24px;height:1px;background:#e2e2e2;"></div>
<div class="t" style="left:73px;top:313.44px;font-size:13.3px;color:#555;transform:translateX(-50%);">3</div>
<div class="a" style="left:62px;top:351px;width:24px;height:1px;background:#e2e2e2;"></div>
<div class="t" style="left:73px;top:336.44px;font-size:13.3px;color:#555;transform:translateX(-50%);">4</div>
<div class="a" style="left:62px;top:355px;width:24px;height:1px;background:#e2e2e2;"></div>
<div class="a" style="left:62px;top:413px;width:24px;height:1px;background:#e2e2e2;"></div>
<div class="t" style="left:73px;top:398.44px;font-size:13.3px;color:#555;transform:translateX(-50%);">6</div>
<div class="a" style="left:62px;top:436px;width:24px;height:1px;background:#e2e2e2;"></div>
<div class="t" style="left:73px;top:421.44px;font-size:13.3px;color:#555;transform:translateX(-50%);">7</div>
<div class="a" style="left:62px;top:440px;width:24px;height:1px;background:#e2e2e2;"></div>
<div class="a" style="left:62px;top:498px;width:24px;height:1px;background:#e2e2e2;"></div>
<div class="t" style="left:73px;top:483.44px;font-size:13.3px;color:#555;transform:translateX(-50%);">9</div>
<div class="a" style="left:62px;top:521px;width:24px;height:1px;background:#e2e2e2;"></div>
<div class="t" style="left:73px;top:506.44px;font-size:13.3px;color:#555;transform:translateX(-50%);">10</div>
<div class="a" style="left:62px;top:525px;width:24px;height:1px;background:#e2e2e2;"></div>
<div class="a" style="left:62px;top:582px;width:24px;height:1px;background:#e2e2e2;"></div>
<div class="t" style="left:73px;top:567.44px;font-size:13.3px;color:#555;transform:translateX(-50%);">12</div>
<div class="a" style="left:62px;top:606px;width:24px;height:1px;background:#e2e2e2;"></div>
<div class="t" style="left:73px;top:591.44px;font-size:13.3px;color:#555;transform:translateX(-50%);">13</div>
<div class="a" style="left:62px;top:610px;width:24px;height:1px;background:#e2e2e2;"></div>
<div class="a" style="left:62px;top:669px;width:24px;height:1px;background:#e2e2e2;"></div>
<div class="t" style="left:73px;top:654.44px;font-size:13.3px;color:#555;transform:translateX(-50%);">15</div>
<div class="a" style="left:62px;top:707px;width:24px;height:1px;background:#e2e2e2;"></div>
<div class="t" style="left:73px;top:692.44px;font-size:13.3px;color:#555;transform:translateX(-50%);">16</div>
<div class="a" style="left:62px;top:730px;width:24px;height:1px;background:#e2e2e2;"></div>
<div class="t" style="left:73px;top:715.44px;font-size:13.3px;color:#555;transform:translateX(-50%);">17</div>
<div class="a" style="left:62px;top:766px;width:24px;height:1px;background:#e2e2e2;"></div>
<div class="t" style="left:73px;top:751.44px;font-size:13.3px;color:#555;transform:translateX(-50%);">18</div>
<div class="a" style="left:62px;top:801px;width:24px;height:1px;background:#e2e2e2;"></div>
<div class="t" style="left:73px;top:786.44px;font-size:13.3px;color:#555;transform:translateX(-50%);">19</div>
<div class="a" style="left:62px;top:836px;width:24px;height:1px;background:#e2e2e2;"></div>
<div class="t" style="left:73px;top:821.44px;font-size:13.3px;color:#555;transform:translateX(-50%);">20</div>
<div class="a" style="left:62px;top:871px;width:24px;height:1px;background:#e2e2e2;"></div>
<div class="t" style="left:73px;top:856.44px;font-size:13.3px;color:#555;transform:translateX(-50%);">21</div>
<div class="a" style="left:62px;top:906px;width:24px;height:1px;background:#e2e2e2;"></div>
<div class="t" style="left:73px;top:891.44px;font-size:13.3px;color:#555;transform:translateX(-50%);">22</div>
<div class="a" style="left:62px;top:941px;width:24px;height:1px;background:#e2e2e2;"></div>
<div class="t" style="left:73px;top:926.44px;font-size:13.3px;color:#555;transform:translateX(-50%);">23</div>
<div class="a" style="left:62px;top:976px;width:24px;height:1px;background:#e2e2e2;"></div>
<div class="t" style="left:73px;top:961.44px;font-size:13.3px;color:#555;transform:translateX(-50%);">24</div>
<div class="a" style="left:62px;top:1011px;width:24px;height:1px;background:#e2e2e2;"></div>
<div class="t" style="left:73px;top:996.44px;font-size:13.3px;color:#555;transform:translateX(-50%);">25</div>
<div class="a" style="left:87px;top:237px;width:1638px;height:763px;background:#d9d7d3;"></div>
<div class="a" style="left:87px;top:231px;width:1638px;height:6px;background:#1d8cf8;"></div>
<div class="a" style="left:87px;top:237px;width:1638px;height:50px;background:#403f3d;"></div>
<div class="a" style="left:85px;top:230px;width:37px;height:9.5px;border:2px solid #1f6b3c;"></div>
<div class="a" style="left:87px;top:232px;width:33px;height:5.5px;border:1px solid #fff;border-right:none;border-bottom:1.5px solid #fff;"></div>
<div class="a" style="left:116.5px;top:233.5px;width:6.5px;height:6.5px;background:#2a8a4a;border-left:1px solid #fff;border-top:1px solid #fff;"></div>
<div class="t" style="left:125px;top:250.84px;font-size:25px;color:#ffffff;letter-spacing:-0.4px;-webkit-text-stroke:0.5px #fff;">Persönliches Budget</div>
<div class="t" style="left:124px;top:310.79px;font-size:15.6px;color:#5b5a57;">Ausgegebener Prozentsatz der Einkünfte</div>
<svg style="left:0px;top:0px;" width="1" height="1" viewBox="0 0 1 1"><path d="M368.86 610.22 A132 132 0 1 1 278.5 382 L278.5 415 A99 99 0 1 0 346.27 586.17 Z" fill="#168bfb"/><path d="M278.5 382 A132 132 0 0 1 368.86 610.22 L346.27 586.17 A99 99 0 0 0 278.5 415 Z" fill="#6cb5fb"/></svg>
<svg style="left:0px;top:0px;" width="1" height="1" viewBox="0 0 1 1"><g fill="none" stroke="#5d5c58" stroke-width="5.2"><circle cx="231.7" cy="519.4" r="11.9"/><path d="M239.8 485.3 L222.4 511"/><path d="M255 496.5 A13.6 13.6 0 1 1 281.5 503 Q279.5 509 272 515.5 L256 530"/><path d="M253.5 530 H284.5"/><circle cx="318.3" cy="495.2" r="7.9"/><circle cx="343.7" cy="523.2" r="9.2"/></g><path d="M310 535.8 L315 535.8 L349 485.5 L345 484 Z" fill="#5d5c58"/><path d="M322 487.6 Q334 489.8 349.8 483.3 L346.8 488.6 Q334 494 323 492.4 Z" fill="#5d5c58"/></svg>
<div class="t" style="left:592px;top:310.88px;font-size:15.5px;color:#5b5a57;">Übersicht</div>
<div class="t" style="left:591px;top:337.67px;font-size:12.2px;color:#1b8cf2;-webkit-text-stroke:0.25px currentColor;">SUMME MONATLICHE EINKÜNFTE</div>
<div class="a" style="left:588px;top:351px;width:310px;height:1px;background:#a9a8a4;"></div>
<div class="t" style="left:594px;top:360.61px;font-size:30px;color:#605f5c;">3.750 €</div>
<div class="t" style="left:591px;top:422.67px;font-size:12.2px;color:#1b8cf2;-webkit-text-stroke:0.25px currentColor;">SUMME MONATLICHE AUSGABEN</div>
<div class="a" style="left:588px;top:436px;width:310px;height:1px;background:#a9a8a4;"></div>
<div class="t" style="left:594px;top:445.61px;font-size:30px;color:#605f5c;">2.336 €</div>
<div class="t" style="left:591px;top:507.67px;font-size:12.2px;color:#1b8cf2;-webkit-text-stroke:0.25px currentColor;">SUMME MONATLICHE SPAREINLAGEN</div>
<div class="a" style="left:588px;top:521px;width:310px;height:1px;background:#a9a8a4;"></div>
<div class="t" style="left:594px;top:530.61px;font-size:30px;color:#605f5c;">550 €</div>
<div class="t" style="left:591px;top:592.67px;font-size:12.2px;color:#1b8cf2;-webkit-text-stroke:0.25px currentColor;">KASSENBESTAND</div>
<div class="a" style="left:588px;top:606px;width:310px;height:1px;background:#a9a8a4;"></div>
<div class="t" style="left:594px;top:615.61px;font-size:30px;color:#605f5c;">864 €</div>
<div class="t" style="left:990px;top:345.34px;font-size:12px;color:#5b5a57;letter-spacing:-0.3px;transform:translateX(-100%);">4.000 €</div>
<div class="a" style="left:996px;top:351px;width:4px;height:1px;background:#b2b0ac;"></div>
<div class="t" style="left:990px;top:377.24px;font-size:12px;color:#5b5a57;letter-spacing:-0.3px;transform:translateX(-100%);">3.500 €</div>
<div class="a" style="left:996px;top:383px;width:4px;height:1px;background:#b2b0ac;"></div>
<div class="t" style="left:990px;top:409.14px;font-size:12px;color:#5b5a57;letter-spacing:-0.3px;transform:translateX(-100%);">3.000 €</div>
<div class="a" style="left:996px;top:415px;width:4px;height:1px;background:#b2b0ac;"></div>
<div class="t" style="left:990px;top:441.04px;font-size:12px;color:#5b5a57;letter-spacing:-0.3px;transform:translateX(-100%);">2.500 €</div>
<div class="a" style="left:996px;top:447px;width:4px;height:1px;background:#b2b0ac;"></div>
<div class="t" style="left:990px;top:472.94px;font-size:12px;color:#5b5a57;letter-spacing:-0.3px;transform:translateX(-100%);">2.000 €</div>
<div class="a" style="left:996px;top:479px;width:4px;height:1px;background:#b2b0ac;"></div>
<div class="t" style="left:990px;top:504.84px;font-size:12px;color:#5b5a57;letter-spacing:-0.3px;transform:translateX(-100%);">1.500 €</div>
<div class="a" style="left:996px;top:510px;width:4px;height:1px;background:#b2b0ac;"></div>
<div class="t" style="left:990px;top:536.74px;font-size:12px;color:#5b5a57;letter-spacing:-0.3px;transform:translateX(-100%);">1.000 €</div>
<div class="a" style="left:996px;top:542px;width:4px;height:1px;background:#b2b0ac;"></div>
<div class="t" style="left:990px;top:568.64px;font-size:12px;color:#5b5a57;letter-spacing:-0.3px;transform:translateX(-100%);">500 €</div>
<div class="a" style="left:996px;top:574px;width:4px;height:1px;background:#b2b0ac;"></div>
<div class="t" style="left:990px;top:600.54px;font-size:12px;color:#5b5a57;letter-spacing:-0.3px;transform:translateX(-100%);">0 €</div>
<div class="a" style="left:996px;top:606px;width:4px;height:1px;background:#b2b0ac;"></div>
<div class="a" style="left:1000px;top:351px;width:1px;height:256px;background:#b2b0ac;"></div>
<div class="a" style="left:996px;top:606px;width:194px;height:1px;background:#b2b0ac;"></div>
<div class="a" style="left:1015px;top:368px;width:81px;height:238px;background:#168bfb;"></div>
<div class="a" style="left:1096px;top:458px;width:81px;height:148px;background:#6cb5fb;"></div>
<div class="a" style="left:1008px;top:635px;width:6px;height:7px;background:#168bfb;"></div>
<div class="t" style="left:1017.5px;top:631.42px;font-size:12.5px;color:#5b5a57;letter-spacing:-0.2px;">Einkünfte</div>
<div class="a" style="left:1100px;top:635px;width:7px;height:7px;background:#6cb5fb;"></div>
<div class="t" style="left:1110.5px;top:631.42px;font-size:12.5px;color:#5b5a57;letter-spacing:-0.2px;">Ausgaben</div>
<div class="t" style="left:124px;top:689.71px;font-size:15.7px;color:#5b5a57;letter-spacing:0.018px;">Monatliche Einkünfte</div>
<div class="t" style="left:123.5px;top:714.14px;font-size:12px;color:#1b8cf2;letter-spacing:-0.474px;-webkit-text-stroke:0.3px currentColor;">POSTEN</div>
<svg style="left:251px;top:712px;" width="17" height="17" viewBox="0 0 17 17"><rect x="0.5" y="0.5" width="16" height="16" fill="#fff" stroke="#8a8a8a" stroke-width="1"/><path d="M4 6 H13 L8.5 11 Z" fill="#555"/></svg>
<div class="t" style="left:271.5px;top:714.14px;font-size:12px;color:#1b8cf2;letter-spacing:-0.257px;-webkit-text-stroke:0.3px currentColor;">BETRAG</div>
<svg style="left:374px;top:712px;" width="17" height="17" viewBox="0 0 17 17"><rect x="0.5" y="0.5" width="16" height="16" fill="#fff" stroke="#8a8a8a" stroke-width="1"/><path d="M4 6 H13 L8.5 11 Z" fill="#555"/></svg>
<div class="a" style="left:120px;top:730px;width:272px;height:1px;background:#a9a8a4;"></div>
<div class="t" style="left:123.5px;top:741.83px;font-size:13.2px;color:#5b5a57;letter-spacing:0.201px;">Einkünfte Quelle 1</div>
<div class="t" style="left:271.5px;top:741.83px;font-size:13.2px;color:#5b5a57;letter-spacing:-0.194px;">2.500,00 €</div>
<div class="a" style="left:120px;top:765px;width:272px;height:1px;background:#a9a8a4;"></div>
<div class="t" style="left:123.5px;top:776.83px;font-size:13.2px;color:#5b5a57;letter-spacing:0.262px;">Einkünfte Quelle 2</div>
<div class="t" style="left:271.5px;top:776.83px;font-size:13.2px;color:#5b5a57;letter-spacing:-0.194px;">1.000,00 €</div>
<div class="a" style="left:120px;top:800px;width:272px;height:1px;background:#a9a8a4;"></div>
<div class="t" style="left:123.5px;top:811.83px;font-size:13.2px;color:#5b5a57;letter-spacing:-0.158px;">Sonstiges</div>
<div class="t" style="left:271.5px;top:811.83px;font-size:13.2px;color:#5b5a57;letter-spacing:-0.218px;">250,00 €</div>
<div class="a" style="left:385px;top:832px;width:6px;height:2.5px;background:#3b4bb0;"></div>
<div class="a" style="left:388.5px;top:828px;width:2.5px;height:6px;background:#3b4bb0;"></div>
<div class="t" style="left:444px;top:689.71px;font-size:15.7px;color:#5b5a57;letter-spacing:-0.032px;">Monatliche Ausgaben</div>
<div class="t" style="left:443px;top:714.14px;font-size:12px;color:#1b8cf2;letter-spacing:-0.474px;-webkit-text-stroke:0.3px currentColor;">POSTEN</div>
<svg style="left:571px;top:712px;" width="17" height="17" viewBox="0 0 17 17"><rect x="0.5" y="0.5" width="16" height="16" fill="#fff" stroke="#8a8a8a" stroke-width="1"/><path d="M4 6 H13 L8.5 11 Z" fill="#555"/></svg>
<div class="t" style="left:591.5px;top:714.14px;font-size:12px;color:#1b8cf2;letter-spacing:0.169px;-webkit-text-stroke:0.3px currentColor;">FÄLLIGKEITSDATUM</div>
<svg style="left:762px;top:712px;" width="17" height="17" viewBox="0 0 17 17"><rect x="0.5" y="0.5" width="16" height="16" fill="#fff" stroke="#8a8a8a" stroke-width="1"/><path d="M4 6 H13 L8.5 11 Z" fill="#555"/></svg>
<div class="t" style="left:782px;top:714.14px;font-size:12px;color:#1b8cf2;letter-spacing:-0.257px;-webkit-text-stroke:0.3px currentColor;">BETRAG</div>
<svg style="left:880px;top:712px;" width="17" height="17" viewBox="0 0 17 17"><rect x="0.5" y="0.5" width="16" height="16" fill="#fff" stroke="#8a8a8a" stroke-width="1"/><path d="M4 6 H13 L8.5 11 Z" fill="#555"/></svg>
<div class="a" style="left:440px;top:730px;width:458px;height:1px;background:#a9a8a4;"></div>
<div class="t" style="left:443px;top:741.83px;font-size:13.2px;color:#5b5a57;letter-spacing:0.705px;">Miete/Hypothek</div>
<div class="t" style="left:591.5px;top:741.83px;font-size:13.2px;color:#5b5a57;letter-spacing:0.69px;">[Datum]</div>
<div class="t" style="left:782px;top:741.83px;font-size:13.2px;color:#5b5a57;letter-spacing:-0.168px;">800,00 €</div>
<div class="a" style="left:440px;top:765px;width:458px;height:1px;background:#a9a8a4;"></div>
<div class="t" style="left:443px;top:776.83px;font-size:13.2px;color:#5b5a57;letter-spacing:0.006px;">Strom</div>
<div class="t" style="left:591.5px;top:776.83px;font-size:13.2px;color:#5b5a57;letter-spacing:0.69px;">[Datum]</div>
<div class="t" style="left:782px;top:776.83px;font-size:13.2px;color:#5b5a57;letter-spacing:-0.168px;">120,00 €</div>
<div class="a" style="left:440px;top:800px;width:458px;height:1px;background:#a9a8a4;"></div>
<div class="t" style="left:443px;top:811.83px;font-size:13.2px;color:#5b5a57;letter-spacing:0.204px;">Gas</div>
<div class="t" style="left:591.5px;top:811.83px;font-size:13.2px;color:#5b5a57;letter-spacing:0.69px;">[Datum]</div>
<div class="t" style="left:782px;top:811.83px;font-size:13.2px;color:#5b5a57;letter-spacing:-0.1px;">50,00 €</div>
<div class="a" style="left:440px;top:835px;width:458px;height:1px;background:#a9a8a4;"></div>
<div class="t" style="left:443px;top:846.83px;font-size:13.2px;color:#5b5a57;letter-spacing:0.733px;">Mobiltelefon</div>
<div class="t" style="left:591.5px;top:846.83px;font-size:13.2px;color:#5b5a57;letter-spacing:0.69px;">[Datum]</div>
<div class="t" style="left:782px;top:846.83px;font-size:13.2px;color:#5b5a57;letter-spacing:-0.1px;">45,00 €</div>
<div class="a" style="left:440px;top:870px;width:458px;height:1px;background:#a9a8a4;"></div>
<div class="t" style="left:443px;top:881.83px;font-size:13.2px;color:#5b5a57;letter-spacing:0.235px;">Lebensmittel</div>
<div class="t" style="left:591.5px;top:881.83px;font-size:13.2px;color:#5b5a57;letter-spacing:0.69px;">[Datum]</div>
<div class="t" style="left:782px;top:881.83px;font-size:13.2px;color:#5b5a57;letter-spacing:-0.168px;">500,00 €</div>
<div class="a" style="left:440px;top:905px;width:458px;height:1px;background:#a9a8a4;"></div>
<div class="t" style="left:443px;top:916.83px;font-size:13.2px;color:#5b5a57;letter-spacing:0.097px;">Rate für Kfz</div>
<div class="t" style="left:591.5px;top:916.83px;font-size:13.2px;color:#5b5a57;letter-spacing:0.69px;">[Datum]</div>
<div class="t" style="left:782px;top:916.83px;font-size:13.2px;color:#5b5a57;letter-spacing:-0.168px;">273,00 €</div>
<div class="a" style="left:440px;top:940px;width:458px;height:1px;background:#a9a8a4;"></div>
<div class="t" style="left:443px;top:951.83px;font-size:13.2px;color:#5b5a57;letter-spacing:-0.052px;">Kfz-Kosten</div>
<div class="t" style="left:591.5px;top:951.83px;font-size:13.2px;color:#5b5a57;letter-spacing:0.69px;">[Datum]</div>
<div class="t" style="left:782px;top:951.83px;font-size:13.2px;color:#5b5a57;letter-spacing:-0.168px;">120,00 €</div>
<div class="a" style="left:440px;top:975px;width:458px;height:1px;background:#a9a8a4;"></div>
<div class="t" style="left:443px;top:986.83px;font-size:13.2px;color:#5b5a57;letter-spacing:0.363px;">Studienkredite</div>
<div class="t" style="left:591.5px;top:986.83px;font-size:13.2px;color:#5b5a57;letter-spacing:0.69px;">[Datum]</div>
<div class="t" style="left:782px;top:986.83px;font-size:13.2px;color:#5b5a57;letter-spacing:-0.1px;">50,00 €</div>
<div class="a" style="left:440px;top:1010px;width:458px;height:1px;background:#a9a8a4;"></div>
<div class="t" style="left:950px;top:689.71px;font-size:15.7px;color:#5b5a57;letter-spacing:-0.091px;">Monatliche Spareinlagen</div>
<div class="t" style="left:949px;top:714.14px;font-size:12px;color:#1b8cf2;letter-spacing:0.484px;-webkit-text-stroke:0.3px currentColor;">DATUM</div>
<svg style="left:1058px;top:712px;" width="17" height="17" viewBox="0 0 17 17"><rect x="0.5" y="0.5" width="16" height="16" fill="#fff" stroke="#8a8a8a" stroke-width="1"/><path d="M4 6 H13 L8.5 11 Z" fill="#555"/></svg>
<div class="t" style="left:1078px;top:714.14px;font-size:12px;color:#1b8cf2;letter-spacing:-0.257px;-webkit-text-stroke:0.3px currentColor;">BETRAG</div>
<svg style="left:1176px;top:712px;" width="17" height="17" viewBox="0 0 17 17"><rect x="0.5" y="0.5" width="16" height="16" fill="#fff" stroke="#8a8a8a" stroke-width="1"/><path d="M4 6 H13 L8.5 11 Z" fill="#555"/></svg>
<div class="a" style="left:946px;top:730px;width:248px;height:1px;background:#a9a8a4;"></div>
<div class="t" style="left:949px;top:741.83px;font-size:13.2px;color:#5b5a57;letter-spacing:0.69px;">[Datum]</div>
<div class="t" style="left:1078px;top:741.83px;font-size:13.2px;color:#5b5a57;letter-spacing:-0.168px;">200,00 €</div>
<div class="a" style="left:946px;top:765px;width:248px;height:1px;background:#a9a8a4;"></div>
<div class="t" style="left:949px;top:776.83px;font-size:13.2px;color:#5b5a57;letter-spacing:0.69px;">[Datum]</div>
<div class="t" style="left:1078px;top:776.83px;font-size:13.2px;color:#5b5a57;letter-spacing:-0.218px;">250,00 €</div>
<div class="a" style="left:946px;top:800px;width:248px;height:1px;background:#a9a8a4;"></div>
<div class="t" style="left:949px;top:811.83px;font-size:13.2px;color:#5b5a57;letter-spacing:0.69px;">[Datum]</div>
<div class="t" style="left:1078px;top:811.83px;font-size:13.2px;color:#5b5a57;letter-spacing:-0.168px;">100,00 €</div>
<div class="a" style="left:1187px;top:832px;width:6px;height:2.5px;background:#3b4bb0;"></div>
<div class="a" style="left:1190.5px;top:828px;width:2.5px;height:6px;background:#3b4bb0;"></div>
<div class="a" style="left:59px;top:1000px;width:1666px;height:26px;background:#f0f0f0;"></div>
<svg style="left:72px;top:1007px;" width="10" height="12" viewBox="0 0 10 12"><path d="M8 1 L2 6 L8 11 Z" fill="#c4c4c4"/></svg>
<svg style="left:95px;top:1007px;" width="10" height="12" viewBox="0 0 10 12"><path d="M2 1 L8 6 L2 11 Z" fill="#c4c4c4"/></svg>
<div class="a" style="left:120px;top:1000px;width:127px;height:22px;background:#fff;border-radius:0 0 3px 3px;box-shadow:0 1px 2px rgba(0,0,0,.25);"></div>
<div class="a" style="left:123px;top:1002px;width:121px;height:18px;background:linear-gradient(#f2f2f2,#d2d2d2 60%,#bdbdbd);"></div>
<div class="t" style="left:183.5px;top:1006.59px;font-size:12.3px;color:#2e8b57;font-weight:bold;transform:translateX(-50%);">Aktueller Monat</div>
<svg style="left:261px;top:1007px;" width="12" height="12" viewBox="0 0 12 12"><path d="M6 0.5 V11.5 M0.5 6 H11.5" stroke="#444" stroke-width="1.8"/></svg>
<div class="a" style="left:285px;top:1003px;width:1px;height:20px;background:#d6d6d6;"></div>
<div class="a" style="left:59px;top:1026px;width:1666px;height:1px;background:#c6c6c6;"></div>
<div class="a" style="left:59px;top:1027px;width:1666px;height:21px;background:linear-gradient(#ececec,#dcdcdc);border-radius:0 0 9px 9px;"></div>
<div class="t" style="left:84px;top:1031.92px;font-size:12.5px;color:#555;">Bereit</div>
<div class="a" style="left:1404px;top:1027px;width:37px;height:21px;background:#b4b4b4;"></div>
<svg style="left:1415px;top:1030px;" width="14" height="14" viewBox="0 0 14 14"><rect x="0.6" y="0.6" width="12.8" height="12.8" fill="none" stroke="#fff" stroke-width="1.2"/><path d="M4.8 0.6 V13.4 M9.2 0.6 V13.4 M0.6 4.8 H13.4 M0.6 9.2 H13.4" stroke="#fff" stroke-width="1.2"/></svg>
<svg style="left:1450px;top:1030px;" width="15" height="15" viewBox="0 0 15 15"><rect x="0.7" y="0.7" width="13.6" height="13.6" fill="none" stroke="#555" stroke-width="1.1"/><rect x="3" y="3" width="9" height="9" fill="none" stroke="#555" stroke-width="1"/><path d="M4.5 5.5 H10.5 M4.5 7.5 H10.5 M4.5 9.5 H10.5" stroke="#555" stroke-width="0.9"/></svg>
<svg style="left:1486px;top:1030px;" width="15" height="15" viewBox="0 0 15 15"><rect x="0.7" y="0.7" width="13.6" height="13.6" fill="none" stroke="#555" stroke-width="1.1"/><path d="M0.7 9 H7.5 V0.7 M4.2 0.7 V9" fill="none" stroke="#555" stroke-width="1.1"/></svg>
<div class="a" style="left:1520px;top:1037px;width:8px;height:2px;background:#555;"></div>
<div class="a" style="left:1536px;top:1036px;width:98px;height:5px;background:#a9a9a9;border-radius:3px;"></div>
<div class="a" style="left:1582px;top:1031.5px;width:12.5px;height:12.5px;background:#fff;border-radius:50%;box-shadow:0 0.5px 1.5px rgba(0,0,0,.45);"></div>
<svg style="left:1641px;top:1033px;" width="10" height="10" viewBox="0 0 10 10"><path d="M5 0.5 V9.5 M0.5 5 H9.5" stroke="#555" stroke-width="1.8"/></svg>
<div class="t" style="left:1667px;top:1031.42px;font-size:12.5px;color:#5a5a5a;">125 %</div>
<div class="a" style="left:17px;top:1102px;width:1702px;height:90px;background:#c6c6c6;border-radius:6px 6px 0 0;box-shadow:inset 0 1px 0 rgba(255,255,255,.35),0 0 0 1px rgba(60,60,60,.45);"></div>
<div class="a" style="left:1261px;top:1112px;width:1px;height:60px;background:#8f8f8f;"></div>
<div class="a" style="left:1563px;top:1112px;width:1px;height:60px;background:#8f8f8f;"></div>
<div class="a" style="left:53px;top:1176px;width:4px;height:4px;background:#2b2b2b;border-radius:50%;"></div>
<div class="a" style="left:189px;top:1176px;width:4px;height:4px;background:#2b2b2b;border-radius:50%;"></div>
<div class="a" style="left:393px;top:1176px;width:4px;height:4px;background:#2b2b2b;border-radius:50%;"></div>
<div class="a" style="left:869px;top:1176px;width:4px;height:4px;background:#2b2b2b;border-radius:50%;"></div>
<div class="a" style="left:1308px;top:1176px;width:4px;height:4px;background:#2b2b2b;border-radius:50%;"></div>
<div class="a" style="left:1376px;top:1176px;width:4px;height:4px;background:#2b2b2b;border-radius:50%;"></div>
<div class="a" style="left:1444px;top:1176px;width:4px;height:4px;background:#2b2b2b;border-radius:50%;"></div>
<div class="a" style="left:1512px;top:1176px;width:4px;height:4px;background:#2b2b2b;border-radius:50%;"></div>
<svg style="left:0px;top:0px;" width="1" height="1" viewBox="0 0 1 1"><defs><linearGradient id="gfind" x1="0" x2="1"><stop offset="0" stop-color="#1eb4f7"/><stop offset="1" stop-color="#1a7ff0"/></linearGradient><linearGradient id="glp" x1="0" y1="0" x2="0" y2="1"><stop offset="0" stop-color="#d6dadd"/><stop offset="1" stop-color="#85888b"/></linearGradient><linearGradient id="gsaf" x1="0" y1="0" x2="0" y2="1"><stop offset="0" stop-color="#19c5f8"/><stop offset="1" stop-color="#1463e0"/></linearGradient><linearGradient id="gft" x1="0" y1="0" x2="0" y2="1"><stop offset="0" stop-color="#5ee86f"/><stop offset="1" stop-color="#27c43d"/></linearGradient><linearGradient id="gmsg" x1="0" y1="0" x2="0" y2="1"><stop offset="0" stop-color="#6cc6ff"/><stop offset="1" stop-color="#1b76f0"/></linearGradient><linearGradient id="gpod" x1="0" y1="0" x2="0" y2="1"><stop offset="0" stop-color="#d36bf0"/><stop offset="1" stop-color="#8624c9"/></linearGradient><linearGradient id="gapp" x1="0" y1="0" x2="0" y2="1"><stop offset="0" stop-color="#1ec0fb"/><stop offset="1" stop-color="#1462ec"/></linearGradient><linearGradient id="gsys" x1="0" y1="0" x2="0" y2="1"><stop offset="0" stop-color="#b9bcbf"/><stop offset="1" stop-color="#77797c"/></linearGradient><linearGradient id="gfb" x1="0" y1="0" x2="0" y2="1"><stop offset="0" stop-color="#e78ef5"/><stop offset="1" stop-color="#b548d8"/></linearGradient><linearGradient id="gmus" x1="0" y1="0" x2="1" y2="1"><stop offset="0" stop-color="#fa5a6e"/><stop offset="0.5" stop-color="#b66fe8"/><stop offset="1" stop-color="#43a5f5"/></linearGradient><linearGradient id="gcon" x1="0" y1="0" x2="0" y2="1"><stop offset="0" stop-color="#c89a5a"/><stop offset="1" stop-color="#a8773c"/></linearGradient></defs></svg>
<svg style="left:28px;top:1115px;" width="54" height="50" viewBox="0 0 54 50"><rect x="0.5" y="0.5" width="52" height="49" rx="3" fill="url(#gfind)"/><path d="M27 0.5 H49.5 Q52.5 0.5 52.5 3.5 V46.5 Q52.5 49.5 49.5 49.5 H31 Q29 38 26 30 H22 Q20 16 27 0.5 Z" fill="#eef2f7"/><path d="M14 13 V18 M40 13 V18" stroke="#1b2a3a" stroke-width="2.3" stroke-linecap="round"/><path d="M10 32 Q27 45 44 32" fill="none" stroke="#1b2a3a" stroke-width="2.3" stroke-linecap="round"/></svg>
<svg style="left:95px;top:1112px;" width="56" height="56" viewBox="0 0 56 56"><circle cx="28" cy="28" r="27.8" fill="#f4f4f4"/><circle cx="28" cy="28" r="26" fill="url(#glp)"/><path d="M41 11 Q30 12 24 22 L17 24 L12 30 L19 31 L16 36 L20 40 L25 37 L26 44 L32 39 L34 32 Q44 24 41 11 Z" fill="#3a3c40"/><circle cx="34" cy="19" r="3" fill="#c9ccd0"/></svg>
<svg style="left:163px;top:1112px;" width="56" height="56" viewBox="0 0 56 56"><circle cx="28" cy="28" r="27.5" fill="#e9ecef"/><circle cx="28" cy="28" r="25" fill="url(#gsaf)"/><circle cx="28" cy="28" r="21" fill="none" stroke="#e5f3ff" stroke-width="3" stroke-dasharray="0.8 2.5" opacity="0.8"/><path d="M42 14 L31 31 L25 25 Z" fill="#f2323b"/><path d="M14 42 L25 25 L31 31 Z" fill="#f1f1f1"/></svg>
<svg style="left:225px;top:1105px;" width="70" height="70" viewBox="0 0 70 70"><defs><linearGradient id="gsky" x1="0" y1="0" x2="0.2" y2="1"><stop offset="0" stop-color="#2a78e0"/><stop offset="0.6" stop-color="#6aaef0"/><stop offset="1" stop-color="#c8e2f7"/></linearGradient></defs><polygon points="8.9,12.5 50.4,6.5 57,57.5 14.8,62.9" fill="#fff" stroke="#d0d0d0" stroke-width="1.2" stroke-dasharray="1.6 1.4"/><polygon points="12.8,15.4 47.7,10 53.4,52.8 19,59.3" fill="url(#gsky)"/><path d="M18 19 Q22 18 26 24 Q30 32 34 36 Q42 40 48 46 Q40 46 33 42 Q28 44 24 45 Q22 42 28 38 Q24 34 20 28 Z" fill="#d9d2c4"/><path d="M26 36 Q31 34 35 38 Q33 44 27 45 Q23 43 26 36 Z" fill="#b98a4a"/><path d="M20 22 Q25 30 33 36" fill="none" stroke="#2a2a2a" stroke-width="1.2"/><path d="M35 40 Q42 44 47 46" fill="none" stroke="#3a3a3a" stroke-width="1.3"/><circle cx="51" cy="51" r="12" fill="none" stroke="#8a8a8a" stroke-width="1.3" opacity="0.7"/><circle cx="51" cy="51" r="7" fill="none" stroke="#8a8a8a" stroke-width="0.8" opacity="0.6"/><circle cx="51" cy="51" r="2.6" fill="#3d78c0"/></svg>
<svg style="left:298px;top:1115px;" width="58" height="50" viewBox="0 0 58 50"><rect x="0.5" y="0.5" width="50" height="44" rx="10" fill="url(#gft)"/><rect x="9" y="13" width="25" height="20" rx="4" fill="#f4f4f4"/><path d="M34 20 L42 15 V31 L34 26 Z" fill="#f4f4f4"/><circle cx="42" cy="36" r="13" fill="#f3f3f3"/><path d="M37 30 Q36 37 44 42 L46 40 L43 37 L41 38 Q39 36 39 34 L40 32 L38 29 Z" fill="#2bc441"/></svg>
<svg style="left:366px;top:1113px;" width="58" height="56" viewBox="0 0 58 56"><ellipse cx="27" cy="22" rx="27" ry="21" fill="url(#gmsg)"/><path d="M10 35 L6 46 L18 40 Z" fill="#1b76f0"/><ellipse cx="40" cy="37" rx="16" ry="12" fill="#eef3f8"/><path d="M48 45 L52 51 L42 48 Z" fill="#eef3f8"/><circle cx="33" cy="37" r="2.2" fill="#1a5fc0"/><circle cx="40" cy="37" r="2.2" fill="#1a5fc0"/><circle cx="47" cy="37" r="2.2" fill="#1a5fc0"/></svg>
<svg style="left:433px;top:1112px;" width="60" height="58" viewBox="0 0 60 58"><g transform="rotate(-5 28 28)"><rect x="4" y="4" width="48" height="48" fill="#f7f4ea" stroke="#ddd" stroke-width="1"/><path d="M20 4 H52 V30 Q40 30 30 20 Q24 12 20 4 Z" fill="#a6d88e"/><path d="M12 4 V52" stroke="#3c8fe6" stroke-width="4"/><path d="M4 30 L52 42" stroke="#f6c94a" stroke-width="4"/><path d="M4 40 V52 H14 Z" fill="#f4b6c2"/></g><circle cx="15" cy="33" r="7" fill="#1a73e8"/><path d="M15 28 L18 37 L15 35 L12 37 Z" fill="#fff"/><circle cx="43" cy="40" r="12" fill="#f7f7f7" stroke="#ccc"/><text x="36.5" y="44" font-size="9" fill="#444" font-family="Liberation Sans">3D</text><path d="M43 26 L45 29 H41 Z" fill="#e03030"/></svg>
<svg style="left:503px;top:1112px;" width="56" height="56" viewBox="0 0 56 56"><circle cx="28" cy="28" r="27.5" fill="#f3f3f3" stroke="#dedede" stroke-width="0.8"/><ellipse cx="28" cy="16" rx="6.5" ry="11" fill="#f59a2b" opacity="0.85" transform="rotate(0 28 28)"/><ellipse cx="28" cy="16" rx="6.5" ry="11" fill="#f8d830" opacity="0.85" transform="rotate(40 28 28)"/><ellipse cx="28" cy="16" rx="6.5" ry="11" fill="#9ad04a" opacity="0.85" transform="rotate(80 28 28)"/><ellipse cx="28" cy="16" rx="6.5" ry="11" fill="#3fbf7f" opacity="0.85" transform="rotate(120 28 28)"/><ellipse cx="28" cy="16" rx="6.5" ry="11" fill="#3fa9e8" opacity="0.85" transform="rotate(160 28 28)"/><ellipse cx="28" cy="16" rx="6.5" ry="11" fill="#5a72d9" opacity="0.85" transform="rotate(200 28 28)"/><ellipse cx="28" cy="16" rx="6.5" ry="11" fill="#9c6fd6" opacity="0.85" transform="rotate(240 28 28)"/><ellipse cx="28" cy="16" rx="6.5" ry="11" fill="#e5588c" opacity="0.85" transform="rotate(280 28 28)"/><ellipse cx="28" cy="16" rx="6.5" ry="11" fill="#f04a3c" opacity="0.85" transform="rotate(320 28 28)"/></svg>
<svg style="left:573px;top:1108px;" width="54" height="58" viewBox="0 0 54 58"><rect x="3" y="4" width="44" height="50" rx="3" fill="url(#gcon)" transform="rotate(-6 25 29)"/><rect x="46" y="14" width="4" height="8" fill="#4fb3e8"/><rect x="46" y="23" width="4" height="8" fill="#8fd14f"/><rect x="46" y="32" width="4" height="8" fill="#f7b731"/><circle cx="25" cy="28" r="13" fill="none" stroke="#9a6d35" stroke-width="1.5" opacity="0.6"/><circle cx="25" cy="24" r="4.5" fill="#9a6d35" opacity="0.6"/><path d="M16 36 Q25 27 34 36" fill="#9a6d35" opacity="0.6"/></svg>
<svg style="left:639px;top:1109px;" width="58" height="58" viewBox="0 0 58 58"><g transform="rotate(-4 28 28)"><rect x="1" y="7" width="50" height="48" rx="3" fill="#6d6f74"/><rect x="3" y="4" width="48" height="46" rx="3" fill="#fdfdfd"/><path d="M3 7 Q3 4 6 4 H48 Q51 4 51 7 V15 H3 Z" fill="#e8453c"/><text x="14" y="13.5" font-size="9" fill="#fff" font-family="Liberation Sans">NOV</text><text x="8" y="44" font-size="28" fill="#222" font-family="Liberation Sans">24</text></g></svg>
<svg style="left:708px;top:1111px;" width="56" height="58" viewBox="0 0 56 58"><g transform="rotate(-6 28 28)"><rect x="5" y="3" width="44" height="50" rx="4" fill="#fff" stroke="#444" stroke-width="1.5"/><circle cx="13" cy="13" r="3" fill="#3e82f0"/><path d="M19 13 H44" stroke="#bbb" stroke-width="1"/><circle cx="13" cy="22" r="3" fill="#e8453c"/><path d="M19 22 H44" stroke="#bbb" stroke-width="1"/><circle cx="13" cy="31" r="3" fill="#f39c2a"/><path d="M19 31 H44" stroke="#bbb" stroke-width="1"/><circle cx="13" cy="40" r="3" fill="#555"/><path d="M19 40 H44" stroke="#bbb" stroke-width="1"/></g></svg>
<svg style="left:776px;top:1108px;" width="58" height="58" viewBox="0 0 58 58"><g transform="rotate(-6 28 28)"><rect x="4" y="5" width="46" height="46" fill="#fffbe6" stroke="#c9c19a" stroke-width="1"/><rect x="4" y="5" width="46" height="9" fill="#f6d84a"/><path d="M6 17.0 H48" stroke="#d8d3c0" stroke-width="0.8"/><path d="M6 21.5 H48" stroke="#d8d3c0" stroke-width="0.8"/><path d="M6 26.0 H48" stroke="#d8d3c0" stroke-width="0.8"/><path d="M6 30.5 H48" stroke="#d8d3c0" stroke-width="0.8"/><path d="M6 35.0 H48" stroke="#d8d3c0" stroke-width="0.8"/><path d="M6 39.5 H48" stroke="#d8d3c0" stroke-width="0.8"/><path d="M6 44.0 H48" stroke="#d8d3c0" stroke-width="0.8"/><path d="M6 48.5 H48" stroke="#d8d3c0" stroke-width="0.8"/></g></svg>
<svg style="left:843px;top:1111px;" width="56" height="56" viewBox="0 0 56 56"><circle cx="28" cy="28" r="27.5" fill="#f1f1f4" stroke="#ddd" stroke-width="0.8"/><path d="M22 16 L42 11 V36" fill="none" stroke="url(#gmus)" stroke-width="4"/><path d="M22 16 V41" stroke="url(#gmus)" stroke-width="4"/><ellipse cx="17" cy="42" rx="6" ry="5" fill="#a66be8"/><ellipse cx="37" cy="37" rx="6" ry="5" fill="#4fa6f5"/></svg>
<svg style="left:911px;top:1111px;" width="56" height="56" viewBox="0 0 56 56"><circle cx="28" cy="28" r="27.5" fill="url(#gpod)"/><circle cx="28" cy="24" r="15" fill="none" stroke="#f6e8fb" stroke-width="2.5"/><circle cx="28" cy="24" r="9" fill="none" stroke="#f6e8fb" stroke-width="2.5"/><circle cx="28" cy="24" r="5" fill="#f6e8fb"/><path d="M24 32 H32 L31 46 Q28 48 25 46 Z" fill="#f6e8fb"/></svg>
<svg style="left:979px;top:1111px;" width="56" height="56" viewBox="0 0 56 56"><circle cx="28" cy="28" r="27.5" fill="#1a1a1a"/><path d="M19 21 Q17 19 16 21 Q12 20 11 25 Q11 32 15 35 Q17 36 19 34.5 Q21 36 23 35 Q25 33 26 30 Q23 28 23 25 Q23 22 25 21 Q23 19 19 21 Z M19.5 20 Q19.5 17 22.5 16 Q22.5 19 19.5 20 Z" fill="#fff"/><text x="27" y="35" font-size="20" fill="#fff" font-family="Liberation Sans" font-weight="bold">tv</text></svg>
<svg style="left:1047px;top:1111px;" width="56" height="56" viewBox="0 0 56 56"><circle cx="28" cy="28" r="27.5" fill="url(#gapp)"/><path d="M23 13 L38 40 M33 13 L18 40 M12 33 H44" stroke="#fff" stroke-width="4" stroke-linecap="round"/></svg>
<svg style="left:1114px;top:1114px;" width="58" height="54" viewBox="0 0 58 54"><rect x="1" y="1" width="55" height="50" rx="3" fill="url(#gsys)" stroke="#666" stroke-width="0.8"/><rect x="26" y="4" width="4" height="6" fill="#333" transform="rotate(0 28 28)"/><rect x="26" y="4" width="4" height="6" fill="#333" transform="rotate(15 28 28)"/><rect x="26" y="4" width="4" height="6" fill="#333" transform="rotate(30 28 28)"/><rect x="26" y="4" width="4" height="6" fill="#333" transform="rotate(45 28 28)"/><rect x="26" y="4" width="4" height="6" fill="#333" transform="rotate(60 28 28)"/><rect x="26" y="4" width="4" height="6" fill="#333" transform="rotate(75 28 28)"/><rect x="26" y="4" width="4" height="6" fill="#333" transform="rotate(90 28 28)"/><rect x="26" y="4" width="4" height="6" fill="#333" transform="rotate(105 28 28)"/><rect x="26" y="4" width="4" height="6" fill="#333" transform="rotate(120 28 28)"/><rect x="26" y="4" width="4" height="6" fill="#333" transform="rotate(135 28 28)"/><rect x="26" y="4" width="4" height="6" fill="#333" transform="rotate(150 28 28)"/><rect x="26" y="4" width="4" height="6" fill="#333" transform="rotate(165 28 28)"/><rect x="26" y="4" width="4" height="6" fill="#333" transform="rotate(180 28 28)"/><rect x="26" y="4" width="4" height="6" fill="#333" transform="rotate(195 28 28)"/><rect x="26" y="4" width="4" height="6" fill="#333" transform="rotate(210 28 28)"/><rect x="26" y="4" width="4" height="6" fill="#333" transform="rotate(225 28 28)"/><rect x="26" y="4" width="4" height="6" fill="#333" transform="rotate(240 28 28)"/><rect x="26" y="4" width="4" height="6" fill="#333" transform="rotate(255 28 28)"/><rect x="26" y="4" width="4" height="6" fill="#333" transform="rotate(270 28 28)"/><rect x="26" y="4" width="4" height="6" fill="#333" transform="rotate(285 28 28)"/><rect x="26" y="4" width="4" height="6" fill="#333" transform="rotate(300 28 28)"/><rect x="26" y="4" width="4" height="6" fill="#333" transform="rotate(315 28 28)"/><rect x="26" y="4" width="4" height="6" fill="#333" transform="rotate(330 28 28)"/><rect x="26" y="4" width="4" height="6" fill="#333" transform="rotate(345 28 28)"/><circle cx="28" cy="26" r="19" fill="#333"/><circle cx="28" cy="26" r="15" fill="#9a9da1"/><path d="M28 26 L28 12 M28 26 L16 33 M28 26 L40 33" stroke="#333" stroke-width="5"/><circle cx="28" cy="26" r="4" fill="#555"/></svg>
<svg style="left:1152px;top:1108px;" width="26" height="26" viewBox="0 0 26 26"><circle cx="13" cy="13" r="12" fill="#f23b3b"/><text x="9" y="18" font-size="14" fill="#fff" font-family="Liberation Sans" font-weight="bold">1</text></svg>
<svg style="left:1183px;top:1111px;" width="56" height="56" viewBox="0 0 56 56"><circle cx="28" cy="28" r="27.5" fill="#e7b3f3"/><circle cx="28" cy="28" r="25" fill="url(#gfb)"/><path d="M15 16 Q15 13 18 13 H38 Q41 13 41 16 V34 Q41 37 38 37 H30 L24 43 V37 H18 Q15 37 15 34 Z" fill="#fbf3fd"/><path d="M28 17 V28" stroke="#b548d8" stroke-width="3" stroke-linecap="round"/><circle cx="28" cy="33" r="1.8" fill="#b548d8"/></svg>
<svg style="left:1284px;top:1114px;" width="52" height="52" viewBox="0 0 52 52"><rect x="0.5" y="0.5" width="51" height="51" rx="11" fill="#fdfdfd"/><rect x="14" y="9" width="31" height="34" rx="2" fill="#2e7de2"/><rect x="14" y="20" width="31" height="12" fill="#2467cf"/><rect x="14" y="32" width="31" height="11" fill="#1a4fb0"/><rect x="5" y="16" width="20" height="20" rx="2" fill="#1c5bbf"/><text x="15" y="31.5" font-size="14" text-anchor="middle" fill="#fff" font-family="Liberation Sans" font-weight="bold">W</text></svg>
<svg style="left:1352px;top:1114px;" width="52" height="52" viewBox="0 0 52 52"><rect x="0.5" y="0.5" width="51" height="51" rx="11" fill="#fdfdfd"/><rect x="14" y="9" width="31" height="34" rx="2" fill="#23a566"/><rect x="30" y="9" width="15" height="12" fill="#33c481"/><rect x="14" y="32" width="31" height="11" fill="#185c37"/><rect x="5" y="16" width="20" height="20" rx="2" fill="#1d7544"/><text x="15" y="31.5" font-size="14" text-anchor="middle" fill="#fff" font-family="Liberation Sans" font-weight="bold">X</text></svg>
<svg style="left:1420px;top:1114px;" width="52" height="52" viewBox="0 0 52 52"><rect x="0.5" y="0.5" width="51" height="51" rx="11" fill="#fdfdfd"/><circle cx="29" cy="26" r="17" fill="#ed6c47"/><path d="M29 9 A17 17 0 0 1 46 26 H29 Z" fill="#ff8f6b"/><rect x="5" y="16" width="20" height="20" rx="2" fill="#c4381e"/><text x="15" y="31.5" font-size="14" text-anchor="middle" fill="#fff" font-family="Liberation Sans" font-weight="bold">P</text></svg>
<svg style="left:1488px;top:1114px;" width="52" height="52" viewBox="0 0 52 52"><rect x="0.5" y="0.5" width="51" height="51" rx="11" fill="#fdfdfd"/><rect x="14" y="9" width="31" height="34" rx="2" fill="#1490df"/><rect x="30" y="9" width="15" height="12" fill="#50d9ff"/><path d="M14 26 L45 26 V43 H14 Z" fill="#28a8ea"/><rect x="5" y="16" width="20" height="20" rx="2" fill="#0f62c5"/><text x="15" y="31.5" font-size="14" text-anchor="middle" fill="#fff" font-family="Liberation Sans" font-weight="bold">O</text></svg>
<svg style="left:1582px;top:1108px;" width="62" height="60" viewBox="0 0 62 60"><path d="M8 26 L31 16 L54 26 L54 44 L31 56 L8 44 Z" fill="#b27845"/><path d="M31 36 L54 26 V44 L31 56 Z" fill="#9a6232"/><path d="M8 26 L31 36 L31 56 L8 44 Z" fill="#c58b55"/><path d="M16 12 L31 5 L46 12 V30 L31 37 L16 30 Z" fill="#f3d637" opacity="0.9"/><path d="M16 12 L31 19 L46 12" fill="none" stroke="#e3c020" stroke-width="1"/><path d="M2 30 L8 26 L31 36 L24 42 Z" fill="#dcac73"/><path d="M60 30 L54 26 L31 36 L38 42 Z" fill="#dcac73"/></svg>
<svg style="left:1652px;top:1108px;" width="58" height="62" viewBox="0 0 58 62"><defs><linearGradient id="gtr" x1="0" x2="1"><stop offset="0" stop-color="#e4e4e4"/><stop offset="0.5" stop-color="#f2f2f2"/><stop offset="1" stop-color="#dcdcdc"/></linearGradient></defs><path d="M7 10 L12 56 Q13 60 18 60 H40 Q45 60 46 56 L51 10 Z" fill="url(#gtr)" stroke="#cfcfcf" stroke-width="1"/><ellipse cx="29" cy="10" rx="22" ry="5" fill="#e8e8e8" stroke="#c9c9c9" stroke-width="1"/><path d="M10 11 L16 5 L22 10 Z" fill="#3a3d40"/><path d="M18 9 L24 3 L29 8 Z" fill="#6a8fa0"/><path d="M25 8 L31 2 L36 9 Z" fill="#2d3038"/><path d="M33 9 L39 4 L44 10 Z" fill="#7a5a6a"/><path d="M40 10 L45 5 L49 10 Z" fill="#8a8f96"/><path d="M20 6 L24 8 L22 11 Z" fill="#3ab0c8"/></svg></body></html>
